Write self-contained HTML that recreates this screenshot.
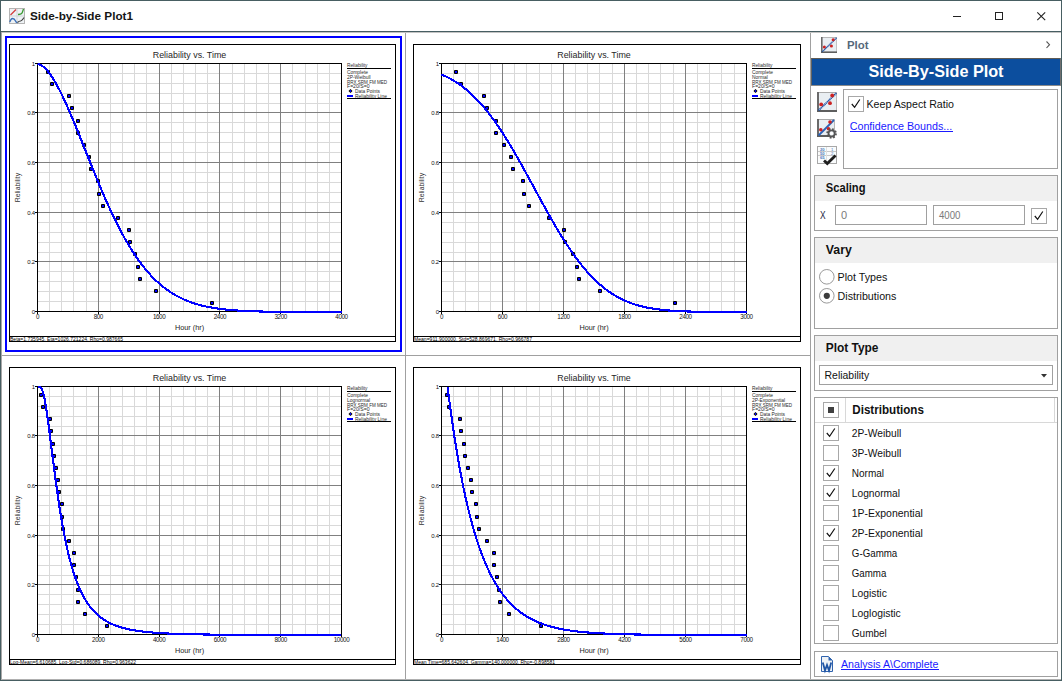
<!DOCTYPE html><html><head><meta charset="utf-8"><style>html,body{margin:0;padding:0;width:1062px;height:681px;overflow:hidden;background:#fff}svg{display:block}</style></head><body><svg width="1062" height="681" viewBox="0 0 1062 681" font-family='"Liberation Sans", sans-serif'>
<rect x="0" y="0" width="1062" height="681" fill="#fff"/>
<rect x="9" y="44" width="387" height="298" fill="#fff"/>
<rect x="9" y="44" width="387" height="1" fill="#000"/>
<rect x="9" y="341" width="387" height="1" fill="#000"/>
<rect x="9" y="44" width="1" height="298" fill="#000"/>
<rect x="395" y="44" width="1" height="298" fill="#000"/>
<rect x="9" y="336" width="387" height="1" fill="#000"/>
<rect x="49" y="64" width="1" height="247" fill="#d9d9d9"/>
<rect x="38" y="73" width="303" height="1" fill="#d9d9d9"/>
<rect x="61" y="64" width="1" height="247" fill="#d9d9d9"/>
<rect x="38" y="83" width="303" height="1" fill="#d9d9d9"/>
<rect x="73" y="64" width="1" height="247" fill="#d9d9d9"/>
<rect x="38" y="93" width="303" height="1" fill="#d9d9d9"/>
<rect x="86" y="64" width="1" height="247" fill="#d9d9d9"/>
<rect x="38" y="103" width="303" height="1" fill="#d9d9d9"/>
<rect x="110" y="64" width="1" height="247" fill="#d9d9d9"/>
<rect x="38" y="122" width="303" height="1" fill="#d9d9d9"/>
<rect x="122" y="64" width="1" height="247" fill="#d9d9d9"/>
<rect x="38" y="132" width="303" height="1" fill="#d9d9d9"/>
<rect x="134" y="64" width="1" height="247" fill="#d9d9d9"/>
<rect x="38" y="142" width="303" height="1" fill="#d9d9d9"/>
<rect x="146" y="64" width="1" height="247" fill="#d9d9d9"/>
<rect x="38" y="152" width="303" height="1" fill="#d9d9d9"/>
<rect x="171" y="64" width="1" height="247" fill="#d9d9d9"/>
<rect x="38" y="172" width="303" height="1" fill="#d9d9d9"/>
<rect x="183" y="64" width="1" height="247" fill="#d9d9d9"/>
<rect x="38" y="182" width="303" height="1" fill="#d9d9d9"/>
<rect x="195" y="64" width="1" height="247" fill="#d9d9d9"/>
<rect x="38" y="192" width="303" height="1" fill="#d9d9d9"/>
<rect x="207" y="64" width="1" height="247" fill="#d9d9d9"/>
<rect x="38" y="202" width="303" height="1" fill="#d9d9d9"/>
<rect x="232" y="64" width="1" height="247" fill="#d9d9d9"/>
<rect x="38" y="222" width="303" height="1" fill="#d9d9d9"/>
<rect x="244" y="64" width="1" height="247" fill="#d9d9d9"/>
<rect x="38" y="232" width="303" height="1" fill="#d9d9d9"/>
<rect x="256" y="64" width="1" height="247" fill="#d9d9d9"/>
<rect x="38" y="242" width="303" height="1" fill="#d9d9d9"/>
<rect x="268" y="64" width="1" height="247" fill="#d9d9d9"/>
<rect x="38" y="252" width="303" height="1" fill="#d9d9d9"/>
<rect x="292" y="64" width="1" height="247" fill="#d9d9d9"/>
<rect x="38" y="271" width="303" height="1" fill="#d9d9d9"/>
<rect x="305" y="64" width="1" height="247" fill="#d9d9d9"/>
<rect x="38" y="281" width="303" height="1" fill="#d9d9d9"/>
<rect x="317" y="64" width="1" height="247" fill="#d9d9d9"/>
<rect x="38" y="291" width="303" height="1" fill="#d9d9d9"/>
<rect x="329" y="64" width="1" height="247" fill="#d9d9d9"/>
<rect x="38" y="301" width="303" height="1" fill="#d9d9d9"/>
<rect x="98" y="64" width="1" height="247" fill="#808080"/>
<rect x="38" y="112" width="303" height="1" fill="#808080"/>
<rect x="159" y="64" width="1" height="247" fill="#808080"/>
<rect x="38" y="162" width="303" height="1" fill="#808080"/>
<rect x="219" y="64" width="1" height="247" fill="#808080"/>
<rect x="38" y="212" width="303" height="1" fill="#808080"/>
<rect x="280" y="64" width="1" height="247" fill="#808080"/>
<rect x="38" y="261" width="303" height="1" fill="#808080"/>
<rect x="37" y="63" width="305" height="1" fill="#000"/>
<rect x="37" y="311" width="305" height="1" fill="#000"/>
<rect x="37" y="63" width="1" height="249" fill="#000"/>
<rect x="341" y="63" width="1" height="249" fill="#000"/>
<rect x="35" y="63" width="2" height="1" fill="#000"/>
<rect x="37" y="312" width="1" height="2" fill="#000"/>
<rect x="35" y="112" width="2" height="1" fill="#000"/>
<rect x="98" y="312" width="1" height="2" fill="#000"/>
<rect x="35" y="162" width="2" height="1" fill="#000"/>
<rect x="159" y="312" width="1" height="2" fill="#000"/>
<rect x="35" y="212" width="2" height="1" fill="#000"/>
<rect x="219" y="312" width="1" height="2" fill="#000"/>
<rect x="35" y="261" width="2" height="1" fill="#000"/>
<rect x="280" y="312" width="1" height="2" fill="#000"/>
<rect x="35" y="311" width="2" height="1" fill="#000"/>
<rect x="341" y="312" width="1" height="2" fill="#000"/>
<text x="34.8" y="66.3" font-size="6" fill="#111" font-weight="normal" text-anchor="end" style="letter-spacing:-0.3px">1</text>
<text x="34.8" y="115.3" font-size="6" fill="#111" font-weight="normal" text-anchor="end" style="letter-spacing:-0.3px">0.8</text>
<text x="34.8" y="165.3" font-size="6" fill="#111" font-weight="normal" text-anchor="end" style="letter-spacing:-0.3px">0.6</text>
<text x="34.8" y="215.3" font-size="6" fill="#111" font-weight="normal" text-anchor="end" style="letter-spacing:-0.3px">0.4</text>
<text x="34.8" y="264.3" font-size="6" fill="#111" font-weight="normal" text-anchor="end" style="letter-spacing:-0.3px">0.2</text>
<text x="34.8" y="314.3" font-size="6" fill="#111" font-weight="normal" text-anchor="end" style="letter-spacing:-0.3px">0</text>
<text x="37.5" y="319" font-size="6.3" fill="#111" font-weight="normal" text-anchor="middle" style="letter-spacing:-0.4px">0</text>
<text x="98.3" y="319" font-size="6.3" fill="#111" font-weight="normal" text-anchor="middle" style="letter-spacing:-0.4px">800</text>
<text x="159.1" y="319" font-size="6.3" fill="#111" font-weight="normal" text-anchor="middle" style="letter-spacing:-0.4px">1600</text>
<text x="219.9" y="319" font-size="6.3" fill="#111" font-weight="normal" text-anchor="middle" style="letter-spacing:-0.4px">2400</text>
<text x="280.7" y="319" font-size="6.3" fill="#111" font-weight="normal" text-anchor="middle" style="letter-spacing:-0.4px">3200</text>
<text x="341.5" y="319" font-size="6.3" fill="#111" font-weight="normal" text-anchor="middle" style="letter-spacing:-0.4px">4000</text>
<text x="189.5" y="58" font-size="9" fill="#262626" font-weight="normal" text-anchor="middle" textLength="73.5" lengthAdjust="spacingAndGlyphs" >Reliability vs. Time</text>
<text x="189.5" y="329.8" font-size="7.3" fill="#222" font-weight="normal" text-anchor="middle" >Hour (hr)</text>
<text transform="translate(19.8,187.5) rotate(-90)" font-size="6.4" fill="#333" text-anchor="middle" textLength="29.4" lengthAdjust="spacingAndGlyphs">Reliability</text>
<rect x="46" y="70" width="4" height="4" rx="0.9" fill="#000"/>
<rect x="47" y="71" width="2" height="2" fill="#0000ff"/>
<rect x="50" y="82" width="4" height="4" rx="0.9" fill="#000"/>
<rect x="51" y="83" width="2" height="2" fill="#0000ff"/>
<rect x="67" y="94" width="4" height="4" rx="0.9" fill="#000"/>
<rect x="68" y="95" width="2" height="2" fill="#0000ff"/>
<rect x="70" y="106" width="4" height="4" rx="0.9" fill="#000"/>
<rect x="71" y="107" width="2" height="2" fill="#0000ff"/>
<rect x="76" y="119" width="4" height="4" rx="0.9" fill="#000"/>
<rect x="77" y="120" width="2" height="2" fill="#0000ff"/>
<rect x="76" y="131" width="4" height="4" rx="0.9" fill="#000"/>
<rect x="77" y="132" width="2" height="2" fill="#0000ff"/>
<rect x="82" y="143" width="4" height="4" rx="0.9" fill="#000"/>
<rect x="83" y="144" width="2" height="2" fill="#0000ff"/>
<rect x="87" y="155" width="4" height="4" rx="0.9" fill="#000"/>
<rect x="88" y="156" width="2" height="2" fill="#0000ff"/>
<rect x="89" y="167" width="4" height="4" rx="0.9" fill="#000"/>
<rect x="90" y="168" width="2" height="2" fill="#0000ff"/>
<rect x="96" y="179" width="4" height="4" rx="0.9" fill="#000"/>
<rect x="97" y="180" width="2" height="2" fill="#0000ff"/>
<rect x="97" y="192" width="4" height="4" rx="0.9" fill="#000"/>
<rect x="98" y="193" width="2" height="2" fill="#0000ff"/>
<rect x="101" y="204" width="4" height="4" rx="0.9" fill="#000"/>
<rect x="102" y="205" width="2" height="2" fill="#0000ff"/>
<rect x="116" y="216" width="4" height="4" rx="0.9" fill="#000"/>
<rect x="117" y="217" width="2" height="2" fill="#0000ff"/>
<rect x="127" y="228" width="4" height="4" rx="0.9" fill="#000"/>
<rect x="128" y="229" width="2" height="2" fill="#0000ff"/>
<rect x="128" y="240" width="4" height="4" rx="0.9" fill="#000"/>
<rect x="129" y="241" width="2" height="2" fill="#0000ff"/>
<rect x="133" y="252" width="4" height="4" rx="0.9" fill="#000"/>
<rect x="134" y="253" width="2" height="2" fill="#0000ff"/>
<rect x="136" y="265" width="4" height="4" rx="0.9" fill="#000"/>
<rect x="137" y="266" width="2" height="2" fill="#0000ff"/>
<rect x="138" y="277" width="4" height="4" rx="0.9" fill="#000"/>
<rect x="139" y="278" width="2" height="2" fill="#0000ff"/>
<rect x="154" y="289" width="4" height="4" rx="0.9" fill="#000"/>
<rect x="155" y="290" width="2" height="2" fill="#0000ff"/>
<rect x="210" y="301" width="4" height="4" rx="0.9" fill="#000"/>
<rect x="211" y="302" width="2" height="2" fill="#0000ff"/>
<clipPath id="c0"><rect x="37" y="62" width="305" height="251"/></clipPath>
<polyline clip-path="url(#c0)" points="37.50,64.00 38.26,64.08 39.02,64.27 39.78,64.54 40.54,64.89 41.30,65.30 42.06,65.79 42.82,66.33 43.58,66.94 44.34,67.60 45.10,68.31 45.86,69.08 46.62,69.90 47.38,70.77 48.14,71.68 48.90,72.64 49.66,73.65 50.42,74.69 51.18,75.78 51.94,76.91 52.70,78.08 53.46,79.28 54.22,80.53 54.98,81.80 55.74,83.11 56.50,84.46 57.26,85.83 58.02,87.24 58.78,88.68 59.54,90.14 60.30,91.64 61.06,93.16 61.82,94.70 62.58,96.27 63.34,97.87 64.10,99.48 64.86,101.12 65.62,102.78 66.38,104.46 67.14,106.16 67.90,107.87 68.66,109.60 69.42,111.35 70.18,113.12 70.94,114.90 71.70,116.69 72.46,118.50 73.22,120.31 73.98,122.14 74.74,123.98 75.50,125.83 76.26,127.69 77.02,129.56 77.78,131.43 78.54,133.31 79.30,135.19 80.06,137.09 80.82,138.98 81.58,140.88 82.34,142.78 83.10,144.69 83.86,146.59 84.62,148.50 85.38,150.41 86.14,152.31 86.90,154.22 87.66,156.12 88.42,158.03 89.18,159.93 89.94,161.82 90.70,163.72 91.46,165.61 92.22,167.49 92.98,169.37 93.74,171.24 94.50,173.11 95.26,174.97 96.02,176.82 96.78,178.67 97.54,180.51 98.30,182.33 99.06,184.15 99.82,185.96 100.58,187.77 101.34,189.56 102.10,191.34 102.86,193.11 103.62,194.87 104.38,196.61 105.14,198.35 105.90,200.07 106.66,201.78 107.42,203.48 108.18,205.17 108.94,206.84 109.70,208.50 110.46,210.15 111.22,211.78 111.98,213.40 112.74,215.00 113.50,216.59 114.26,218.17 115.02,219.73 115.78,221.27 116.54,222.80 117.30,224.32 118.06,225.82 118.82,227.30 119.58,228.77 120.34,230.22 121.10,231.66 121.86,233.08 122.62,234.48 123.38,235.87 124.14,237.25 124.90,238.60 125.66,239.94 126.42,241.27 127.18,242.58 127.94,243.87 128.70,245.15 129.46,246.41 130.22,247.65 130.98,248.88 131.74,250.09 132.50,251.28 133.26,252.46 134.02,253.62 134.78,254.77 135.54,255.90 136.30,257.01 137.06,258.11 137.82,259.19 138.58,260.26 139.34,261.31 140.10,262.34 140.86,263.36 141.62,264.37 142.38,265.36 143.14,266.33 143.90,267.29 144.66,268.23 145.42,269.15 146.18,270.07 146.94,270.96 147.70,271.85 148.46,272.71 149.22,273.57 149.98,274.41 150.74,275.23 151.50,276.04 152.26,276.84 153.02,277.62 153.78,278.39 154.54,279.15 155.30,279.89 156.06,280.62 156.82,281.33 157.58,282.03 158.34,282.72 159.10,283.40 159.86,284.06 160.62,284.72 161.38,285.35 162.14,285.98 162.90,286.60 163.66,287.20 164.42,287.79 165.18,288.37 165.94,288.94 166.70,289.50 167.46,290.04 168.22,290.58 168.98,291.10 169.74,291.61 170.50,292.12 171.26,292.61 172.02,293.09 172.78,293.56 173.54,294.03 174.30,294.48 175.06,294.92 175.82,295.36 176.58,295.78 177.34,296.20 178.10,296.60 178.86,297.00 179.62,297.39 180.38,297.77 181.14,298.14 181.90,298.50 182.66,298.86 183.42,299.20 184.18,299.54 184.94,299.87 185.70,300.20 186.46,300.51 187.22,300.82 187.98,301.12 188.74,301.42 189.50,301.71 190.26,301.99 191.02,302.26 191.78,302.53 192.54,302.79 193.30,303.05 194.06,303.29 194.82,303.54 195.58,303.77 196.34,304.00 197.10,304.23 197.86,304.45 198.62,304.66 199.38,304.87 200.14,305.08 200.90,305.27 201.66,305.47 202.42,305.66 203.18,305.84 203.94,306.02 204.70,306.19 205.46,306.36 206.22,306.53 206.98,306.69 207.74,306.85 208.50,307.00 209.26,307.15 210.02,307.29 210.78,307.43 211.54,307.57 212.30,307.70 213.06,307.83 213.82,307.96 214.58,308.08 215.34,308.20 216.10,308.32 216.86,308.43 217.62,308.54 218.38,308.65 219.14,308.75 219.90,308.85 220.66,308.95 221.42,309.05 222.18,309.14 222.94,309.23 223.70,309.31 224.46,309.40 225.22,309.48 225.98,309.56 226.74,309.64 227.50,309.72 228.26,309.79 229.02,309.86 229.78,309.93 230.54,310.00 231.30,310.06 232.06,310.12 232.82,310.19 233.58,310.24 234.34,310.30 235.10,310.36 235.86,310.41 236.62,310.46 237.38,310.52 238.14,310.57 238.90,310.61 239.66,310.66 240.42,310.70 241.18,310.75 241.94,310.79 242.70,310.83 243.46,310.87 244.22,310.91 244.98,310.95 245.74,310.98 246.50,311.02 247.26,311.05 248.02,311.08 248.78,311.12 249.54,311.15 250.30,311.18 251.06,311.20 251.82,311.23 252.58,311.26 253.34,311.28 254.10,311.31 254.86,311.33 255.62,311.36 256.38,311.38 257.14,311.40 257.90,311.42 258.66,311.44 259.42,311.46 260.18,311.48 260.94,311.50 261.70,311.52 262.46,311.54 263.22,311.55 263.98,311.57 264.74,311.59 265.50,311.60 266.26,311.62 267.02,311.63 267.78,311.64 268.54,311.66 269.30,311.67 270.06,311.68 270.82,311.69 271.58,311.70 272.34,311.72 273.10,311.73 273.86,311.74 274.62,311.75 275.38,311.76 276.14,311.77 276.90,311.77 277.66,311.78 278.42,311.79 279.18,311.80 279.94,311.81 280.70,311.81 281.46,311.82 282.22,311.83 282.98,311.83 283.74,311.84 284.50,311.85 285.26,311.85 286.02,311.86 286.78,311.86 287.54,311.87 288.30,311.87 289.06,311.88 289.82,311.88 290.58,311.89 291.34,311.89 292.10,311.90 292.86,311.90 293.62,311.91 294.38,311.91 295.14,311.91 295.90,311.92 296.66,311.92 297.42,311.92 298.18,311.93 298.94,311.93 299.70,311.93 300.46,311.93 301.22,311.94 301.98,311.94 302.74,311.94 303.50,311.94 304.26,311.95 305.02,311.95 305.78,311.95 306.54,311.95 307.30,311.96 308.06,311.96 308.82,311.96 309.58,311.96 310.34,311.96 311.10,311.96 311.86,311.97 312.62,311.97 313.38,311.97 314.14,311.97 314.90,311.97 315.66,311.97 316.42,311.97 317.18,311.97 317.94,311.98 318.70,311.98 319.46,311.98 320.22,311.98 320.98,311.98 321.74,311.98 322.50,311.98 323.26,311.98 324.02,311.98 324.78,311.98 325.54,311.98 326.30,311.98 327.06,311.99 327.82,311.99 328.58,311.99 329.34,311.99 330.10,311.99 330.86,311.99 331.62,311.99 332.38,311.99 333.14,311.99 333.90,311.99 334.66,311.99 335.42,311.99 336.18,311.99 336.94,311.99 337.70,311.99 338.46,311.99 339.22,311.99 339.98,311.99 340.74,311.99 341.50,311.99" fill="none" stroke="#0000ff" stroke-width="2.1" stroke-linejoin="round" shape-rendering="crispEdges"/>
<text x="347" y="67.2" font-size="4.9" fill="#2a2a2a" font-weight="normal" text-anchor="start" textLength="20.5" lengthAdjust="spacingAndGlyphs" >Reliability</text>
<rect x="347" y="68" width="44" height="1" fill="#000"/>
<text x="347" y="73.9" font-size="4.9" fill="#2a2a2a" font-weight="normal" text-anchor="start" textLength="21" lengthAdjust="spacingAndGlyphs" >Complete</text>
<text x="347" y="79.0" font-size="4.9" fill="#2a2a2a" font-weight="normal" text-anchor="start" >2P-Weibull</text>
<text x="347" y="84.2" font-size="4.9" fill="#2a2a2a" font-weight="normal" text-anchor="start" textLength="40" lengthAdjust="spacingAndGlyphs" >RRX SRM FM MED</text>
<text x="347" y="88.2" font-size="4.9" fill="#2a2a2a" font-weight="normal" text-anchor="start" textLength="22.5" lengthAdjust="spacingAndGlyphs" >F=20/S=0</text>
<path d="M350.5 89 L352.5 91 L350.5 93 L348.5 91 Z" fill="#000"/>
<rect x="350" y="90" width="1" height="2" fill="#0000ff"/>
<text x="355" y="92.8" font-size="4.9" fill="#2a2a2a" font-weight="normal" text-anchor="start" textLength="25" lengthAdjust="spacingAndGlyphs" >Data Points</text>
<rect x="347" y="95" width="6" height="2" fill="#0000ff"/>
<text x="355" y="97.8" font-size="4.9" fill="#2a2a2a" font-weight="normal" text-anchor="start" textLength="32" lengthAdjust="spacingAndGlyphs" >Reliability Line</text>
<rect x="347" y="98" width="44" height="1" fill="#000"/>
<text x="10" y="340.9" font-size="5.6" fill="#000" font-weight="normal" text-anchor="start" textLength="113" lengthAdjust="spacingAndGlyphs" >Beta=1.735945, Eta=1026.721224, Rho=0.987665</text>
<rect x="413" y="44" width="388" height="298" fill="#fff"/>
<rect x="413" y="44" width="388" height="1" fill="#000"/>
<rect x="413" y="341" width="388" height="1" fill="#000"/>
<rect x="413" y="44" width="1" height="298" fill="#000"/>
<rect x="800" y="44" width="1" height="298" fill="#000"/>
<rect x="413" y="336" width="388" height="1" fill="#000"/>
<rect x="453" y="64" width="1" height="247" fill="#d9d9d9"/>
<rect x="442" y="73" width="304" height="1" fill="#d9d9d9"/>
<rect x="465" y="64" width="1" height="247" fill="#d9d9d9"/>
<rect x="442" y="83" width="304" height="1" fill="#d9d9d9"/>
<rect x="478" y="64" width="1" height="247" fill="#d9d9d9"/>
<rect x="442" y="93" width="304" height="1" fill="#d9d9d9"/>
<rect x="490" y="64" width="1" height="247" fill="#d9d9d9"/>
<rect x="442" y="103" width="304" height="1" fill="#d9d9d9"/>
<rect x="514" y="64" width="1" height="247" fill="#d9d9d9"/>
<rect x="442" y="122" width="304" height="1" fill="#d9d9d9"/>
<rect x="526" y="64" width="1" height="247" fill="#d9d9d9"/>
<rect x="442" y="132" width="304" height="1" fill="#d9d9d9"/>
<rect x="539" y="64" width="1" height="247" fill="#d9d9d9"/>
<rect x="442" y="142" width="304" height="1" fill="#d9d9d9"/>
<rect x="551" y="64" width="1" height="247" fill="#d9d9d9"/>
<rect x="442" y="152" width="304" height="1" fill="#d9d9d9"/>
<rect x="575" y="64" width="1" height="247" fill="#d9d9d9"/>
<rect x="442" y="172" width="304" height="1" fill="#d9d9d9"/>
<rect x="587" y="64" width="1" height="247" fill="#d9d9d9"/>
<rect x="442" y="182" width="304" height="1" fill="#d9d9d9"/>
<rect x="599" y="64" width="1" height="247" fill="#d9d9d9"/>
<rect x="442" y="192" width="304" height="1" fill="#d9d9d9"/>
<rect x="612" y="64" width="1" height="247" fill="#d9d9d9"/>
<rect x="442" y="202" width="304" height="1" fill="#d9d9d9"/>
<rect x="636" y="64" width="1" height="247" fill="#d9d9d9"/>
<rect x="442" y="222" width="304" height="1" fill="#d9d9d9"/>
<rect x="648" y="64" width="1" height="247" fill="#d9d9d9"/>
<rect x="442" y="232" width="304" height="1" fill="#d9d9d9"/>
<rect x="660" y="64" width="1" height="247" fill="#d9d9d9"/>
<rect x="442" y="242" width="304" height="1" fill="#d9d9d9"/>
<rect x="673" y="64" width="1" height="247" fill="#d9d9d9"/>
<rect x="442" y="252" width="304" height="1" fill="#d9d9d9"/>
<rect x="697" y="64" width="1" height="247" fill="#d9d9d9"/>
<rect x="442" y="271" width="304" height="1" fill="#d9d9d9"/>
<rect x="709" y="64" width="1" height="247" fill="#d9d9d9"/>
<rect x="442" y="281" width="304" height="1" fill="#d9d9d9"/>
<rect x="721" y="64" width="1" height="247" fill="#d9d9d9"/>
<rect x="442" y="291" width="304" height="1" fill="#d9d9d9"/>
<rect x="734" y="64" width="1" height="247" fill="#d9d9d9"/>
<rect x="442" y="301" width="304" height="1" fill="#d9d9d9"/>
<rect x="502" y="64" width="1" height="247" fill="#808080"/>
<rect x="442" y="112" width="304" height="1" fill="#808080"/>
<rect x="563" y="64" width="1" height="247" fill="#808080"/>
<rect x="442" y="162" width="304" height="1" fill="#808080"/>
<rect x="624" y="64" width="1" height="247" fill="#808080"/>
<rect x="442" y="212" width="304" height="1" fill="#808080"/>
<rect x="685" y="64" width="1" height="247" fill="#808080"/>
<rect x="442" y="261" width="304" height="1" fill="#808080"/>
<rect x="441" y="63" width="306" height="1" fill="#000"/>
<rect x="441" y="311" width="306" height="1" fill="#000"/>
<rect x="441" y="63" width="1" height="249" fill="#000"/>
<rect x="746" y="63" width="1" height="249" fill="#000"/>
<rect x="439" y="63" width="2" height="1" fill="#000"/>
<rect x="441" y="312" width="1" height="2" fill="#000"/>
<rect x="439" y="112" width="2" height="1" fill="#000"/>
<rect x="502" y="312" width="1" height="2" fill="#000"/>
<rect x="439" y="162" width="2" height="1" fill="#000"/>
<rect x="563" y="312" width="1" height="2" fill="#000"/>
<rect x="439" y="212" width="2" height="1" fill="#000"/>
<rect x="624" y="312" width="1" height="2" fill="#000"/>
<rect x="439" y="261" width="2" height="1" fill="#000"/>
<rect x="685" y="312" width="1" height="2" fill="#000"/>
<rect x="439" y="311" width="2" height="1" fill="#000"/>
<rect x="746" y="312" width="1" height="2" fill="#000"/>
<text x="438.8" y="66.3" font-size="6" fill="#111" font-weight="normal" text-anchor="end" style="letter-spacing:-0.3px">1</text>
<text x="438.8" y="115.3" font-size="6" fill="#111" font-weight="normal" text-anchor="end" style="letter-spacing:-0.3px">0.8</text>
<text x="438.8" y="165.3" font-size="6" fill="#111" font-weight="normal" text-anchor="end" style="letter-spacing:-0.3px">0.6</text>
<text x="438.8" y="215.3" font-size="6" fill="#111" font-weight="normal" text-anchor="end" style="letter-spacing:-0.3px">0.4</text>
<text x="438.8" y="264.3" font-size="6" fill="#111" font-weight="normal" text-anchor="end" style="letter-spacing:-0.3px">0.2</text>
<text x="438.8" y="314.3" font-size="6" fill="#111" font-weight="normal" text-anchor="end" style="letter-spacing:-0.3px">0</text>
<text x="441.5" y="319" font-size="6.3" fill="#111" font-weight="normal" text-anchor="middle" style="letter-spacing:-0.4px">0</text>
<text x="502.5" y="319" font-size="6.3" fill="#111" font-weight="normal" text-anchor="middle" style="letter-spacing:-0.4px">600</text>
<text x="563.5" y="319" font-size="6.3" fill="#111" font-weight="normal" text-anchor="middle" style="letter-spacing:-0.4px">1200</text>
<text x="624.5" y="319" font-size="6.3" fill="#111" font-weight="normal" text-anchor="middle" style="letter-spacing:-0.4px">1800</text>
<text x="685.5" y="319" font-size="6.3" fill="#111" font-weight="normal" text-anchor="middle" style="letter-spacing:-0.4px">2400</text>
<text x="746.5" y="319" font-size="6.3" fill="#111" font-weight="normal" text-anchor="middle" style="letter-spacing:-0.4px">3000</text>
<text x="594.0" y="58" font-size="9" fill="#262626" font-weight="normal" text-anchor="middle" textLength="73.5" lengthAdjust="spacingAndGlyphs" >Reliability vs. Time</text>
<text x="594.0" y="329.8" font-size="7.3" fill="#222" font-weight="normal" text-anchor="middle" >Hour (hr)</text>
<text transform="translate(423.8,187.5) rotate(-90)" font-size="6.4" fill="#333" text-anchor="middle" textLength="29.4" lengthAdjust="spacingAndGlyphs">Reliability</text>
<rect x="454" y="70" width="4" height="4" rx="0.9" fill="#000"/>
<rect x="455" y="71" width="2" height="2" fill="#0000ff"/>
<rect x="459" y="82" width="4" height="4" rx="0.9" fill="#000"/>
<rect x="460" y="83" width="2" height="2" fill="#0000ff"/>
<rect x="482" y="94" width="4" height="4" rx="0.9" fill="#000"/>
<rect x="483" y="95" width="2" height="2" fill="#0000ff"/>
<rect x="485" y="106" width="4" height="4" rx="0.9" fill="#000"/>
<rect x="486" y="107" width="2" height="2" fill="#0000ff"/>
<rect x="494" y="119" width="4" height="4" rx="0.9" fill="#000"/>
<rect x="495" y="120" width="2" height="2" fill="#0000ff"/>
<rect x="494" y="131" width="4" height="4" rx="0.9" fill="#000"/>
<rect x="495" y="132" width="2" height="2" fill="#0000ff"/>
<rect x="502" y="143" width="4" height="4" rx="0.9" fill="#000"/>
<rect x="503" y="144" width="2" height="2" fill="#0000ff"/>
<rect x="509" y="155" width="4" height="4" rx="0.9" fill="#000"/>
<rect x="510" y="156" width="2" height="2" fill="#0000ff"/>
<rect x="511" y="167" width="4" height="4" rx="0.9" fill="#000"/>
<rect x="512" y="168" width="2" height="2" fill="#0000ff"/>
<rect x="521" y="179" width="4" height="4" rx="0.9" fill="#000"/>
<rect x="522" y="180" width="2" height="2" fill="#0000ff"/>
<rect x="522" y="192" width="4" height="4" rx="0.9" fill="#000"/>
<rect x="523" y="193" width="2" height="2" fill="#0000ff"/>
<rect x="527" y="204" width="4" height="4" rx="0.9" fill="#000"/>
<rect x="528" y="205" width="2" height="2" fill="#0000ff"/>
<rect x="547" y="216" width="4" height="4" rx="0.9" fill="#000"/>
<rect x="548" y="217" width="2" height="2" fill="#0000ff"/>
<rect x="562" y="228" width="4" height="4" rx="0.9" fill="#000"/>
<rect x="563" y="229" width="2" height="2" fill="#0000ff"/>
<rect x="563" y="240" width="4" height="4" rx="0.9" fill="#000"/>
<rect x="564" y="241" width="2" height="2" fill="#0000ff"/>
<rect x="571" y="252" width="4" height="4" rx="0.9" fill="#000"/>
<rect x="572" y="253" width="2" height="2" fill="#0000ff"/>
<rect x="575" y="265" width="4" height="4" rx="0.9" fill="#000"/>
<rect x="576" y="266" width="2" height="2" fill="#0000ff"/>
<rect x="577" y="277" width="4" height="4" rx="0.9" fill="#000"/>
<rect x="578" y="278" width="2" height="2" fill="#0000ff"/>
<rect x="598" y="289" width="4" height="4" rx="0.9" fill="#000"/>
<rect x="599" y="290" width="2" height="2" fill="#0000ff"/>
<rect x="673" y="301" width="4" height="4" rx="0.9" fill="#000"/>
<rect x="674" y="302" width="2" height="2" fill="#0000ff"/>
<clipPath id="c1"><rect x="441" y="62" width="306" height="251"/></clipPath>
<polyline clip-path="url(#c1)" points="441.50,74.50 442.26,74.82 443.02,75.15 443.79,75.49 444.55,75.83 445.31,76.18 446.07,76.55 446.84,76.92 447.60,77.30 448.36,77.68 449.12,78.08 449.89,78.49 450.65,78.90 451.41,79.32 452.18,79.76 452.94,80.20 453.70,80.65 454.46,81.12 455.23,81.59 455.99,82.07 456.75,82.56 457.51,83.06 458.27,83.58 459.04,84.10 459.80,84.63 460.56,85.18 461.32,85.73 462.09,86.30 462.85,86.87 463.61,87.46 464.38,88.06 465.14,88.67 465.90,89.29 466.66,89.92 467.43,90.56 468.19,91.22 468.95,91.88 469.71,92.56 470.48,93.25 471.24,93.95 472.00,94.66 472.76,95.39 473.52,96.12 474.29,96.87 475.05,97.63 475.81,98.40 476.57,99.19 477.34,99.98 478.10,100.79 478.86,101.61 479.62,102.44 480.39,103.29 481.15,104.14 481.91,105.01 482.68,105.89 483.44,106.78 484.20,107.69 484.96,108.60 485.73,109.53 486.49,110.47 487.25,111.43 488.01,112.39 488.77,113.37 489.54,114.35 490.30,115.35 491.06,116.36 491.82,117.39 492.59,118.42 493.35,119.47 494.11,120.52 494.88,121.59 495.64,122.67 496.40,123.76 497.16,124.86 497.93,125.97 498.69,127.10 499.45,128.23 500.21,129.37 500.98,130.53 501.74,131.69 502.50,132.86 503.26,134.05 504.02,135.24 504.79,136.45 505.55,137.66 506.31,138.88 507.07,140.11 507.84,141.35 508.60,142.60 509.36,143.86 510.12,145.12 510.89,146.39 511.65,147.67 512.41,148.96 513.17,150.26 513.94,151.56 514.70,152.87 515.46,154.19 516.23,155.51 516.99,156.84 517.75,158.18 518.51,159.52 519.27,160.87 520.04,162.22 520.80,163.58 521.56,164.94 522.33,166.31 523.09,167.68 523.85,169.05 524.61,170.43 525.38,171.82 526.14,173.20 526.90,174.59 527.66,175.98 528.42,177.38 529.19,178.77 529.95,180.17 530.71,181.57 531.48,182.97 532.24,184.37 533.00,185.77 533.76,187.18 534.52,188.58 535.29,189.98 536.05,191.39 536.81,192.79 537.58,194.19 538.34,195.59 539.10,196.99 539.86,198.38 540.62,199.78 541.39,201.17 542.15,202.56 542.91,203.94 543.67,205.33 544.44,206.71 545.20,208.08 545.96,209.45 546.73,210.82 547.49,212.19 548.25,213.54 549.01,214.90 549.77,216.25 550.54,217.59 551.30,218.93 552.06,220.26 552.83,221.58 553.59,222.90 554.35,224.21 555.11,225.52 555.88,226.81 556.64,228.10 557.40,229.38 558.16,230.66 558.92,231.93 559.69,233.18 560.45,234.43 561.21,235.67 561.98,236.91 562.74,238.13 563.50,239.34 564.26,240.55 565.02,241.75 565.79,242.93 566.55,244.11 567.31,245.27 568.08,246.43 568.84,247.57 569.60,248.71 570.36,249.83 571.12,250.95 571.89,252.05 572.65,253.14 573.41,254.22 574.17,255.29 574.94,256.35 575.70,257.40 576.46,258.44 577.23,259.46 577.99,260.47 578.75,261.47 579.51,262.46 580.27,263.44 581.04,264.41 581.80,265.36 582.56,266.31 583.33,267.24 584.09,268.15 584.85,269.06 585.61,269.96 586.38,270.84 587.14,271.71 587.90,272.57 588.66,273.41 589.42,274.25 590.19,275.07 590.95,275.88 591.71,276.68 592.48,277.46 593.24,278.24 594.00,279.00 594.76,279.75 595.52,280.49 596.29,281.21 597.05,281.93 597.81,282.63 598.58,283.32 599.34,284.00 600.10,284.67 600.86,285.33 601.62,285.97 602.39,286.60 603.15,287.23 603.91,287.84 604.67,288.44 605.44,289.03 606.20,289.60 606.96,290.17 607.73,290.73 608.49,291.27 609.25,291.81 610.01,292.33 610.77,292.85 611.54,293.35 612.30,293.85 613.06,294.33 613.83,294.80 614.59,295.27 615.35,295.72 616.11,296.17 616.88,296.60 617.64,297.03 618.40,297.44 619.16,297.85 619.92,298.25 620.69,298.64 621.45,299.02 622.21,299.39 622.98,299.75 623.74,300.11 624.50,300.45 625.26,300.79 626.02,301.12 626.79,301.45 627.55,301.76 628.31,302.07 629.08,302.37 629.84,302.66 630.60,302.95 631.36,303.22 632.12,303.49 632.89,303.76 633.65,304.01 634.41,304.27 635.17,304.51 635.94,304.75 636.70,304.98 637.46,305.20 638.23,305.42 638.99,305.63 639.75,305.84 640.51,306.04 641.27,306.24 642.04,306.43 642.80,306.62 643.56,306.80 644.33,306.97 645.09,307.14 645.85,307.30 646.61,307.46 647.38,307.62 648.14,307.77 648.90,307.92 649.66,308.06 650.42,308.20 651.19,308.33 651.95,308.46 652.71,308.59 653.48,308.71 654.24,308.83 655.00,308.94 655.76,309.05 656.52,309.16 657.29,309.26 658.05,309.36 658.81,309.46 659.58,309.55 660.34,309.65 661.10,309.73 661.86,309.82 662.62,309.90 663.39,309.98 664.15,310.06 664.91,310.13 665.67,310.20 666.44,310.27 667.20,310.34 667.96,310.41 668.73,310.47 669.49,310.53 670.25,310.59 671.01,310.64 671.77,310.70 672.54,310.75 673.30,310.80 674.06,310.85 674.83,310.89 675.59,310.94 676.35,310.98 677.11,311.02 677.88,311.06 678.64,311.10 679.40,311.14 680.16,311.18 680.92,311.21 681.69,311.24 682.45,311.28 683.21,311.31 683.98,311.34 684.74,311.37 685.50,311.39 686.26,311.42 687.02,311.44 687.79,311.47 688.55,311.49 689.31,311.51 690.08,311.54 690.84,311.56 691.60,311.58 692.36,311.59 693.12,311.61 693.89,311.63 694.65,311.65 695.41,311.66 696.17,311.68 696.94,311.69 697.70,311.71 698.46,311.72 699.23,311.73 699.99,311.75 700.75,311.76 701.51,311.77 702.27,311.78 703.04,311.79 703.80,311.80 704.56,311.81 705.33,311.82 706.09,311.83 706.85,311.84 707.61,311.84 708.38,311.85 709.14,311.86 709.90,311.87 710.66,311.87 711.42,311.88 712.19,311.88 712.95,311.89 713.71,311.90 714.48,311.90 715.24,311.91 716.00,311.91 716.76,311.91 717.52,311.92 718.29,311.92 719.05,311.93 719.81,311.93 720.58,311.93 721.34,311.94 722.10,311.94 722.86,311.94 723.62,311.95 724.39,311.95 725.15,311.95 725.91,311.95 726.67,311.96 727.44,311.96 728.20,311.96 728.96,311.96 729.73,311.97 730.49,311.97 731.25,311.97 732.01,311.97 732.77,311.97 733.54,311.97 734.30,311.98 735.06,311.98 735.83,311.98 736.59,311.98 737.35,311.98 738.11,311.98 738.88,311.98 739.64,311.98 740.40,311.98 741.16,311.99 741.92,311.99 742.69,311.99 743.45,311.99 744.21,311.99 744.98,311.99 745.74,311.99 746.50,311.99" fill="none" stroke="#0000ff" stroke-width="2.1" stroke-linejoin="round" shape-rendering="crispEdges"/>
<text x="752" y="67.2" font-size="4.9" fill="#2a2a2a" font-weight="normal" text-anchor="start" textLength="20.5" lengthAdjust="spacingAndGlyphs" >Reliability</text>
<rect x="752" y="68" width="44" height="1" fill="#000"/>
<text x="752" y="73.9" font-size="4.9" fill="#2a2a2a" font-weight="normal" text-anchor="start" textLength="21" lengthAdjust="spacingAndGlyphs" >Complete</text>
<text x="752" y="79.0" font-size="4.9" fill="#2a2a2a" font-weight="normal" text-anchor="start" >Normal</text>
<text x="752" y="84.2" font-size="4.9" fill="#2a2a2a" font-weight="normal" text-anchor="start" textLength="40" lengthAdjust="spacingAndGlyphs" >RRX SRM FM MED</text>
<text x="752" y="88.2" font-size="4.9" fill="#2a2a2a" font-weight="normal" text-anchor="start" textLength="22.5" lengthAdjust="spacingAndGlyphs" >F=20/S=0</text>
<path d="M755.5 89 L757.5 91 L755.5 93 L753.5 91 Z" fill="#000"/>
<rect x="755" y="90" width="1" height="2" fill="#0000ff"/>
<text x="760" y="92.8" font-size="4.9" fill="#2a2a2a" font-weight="normal" text-anchor="start" textLength="25" lengthAdjust="spacingAndGlyphs" >Data Points</text>
<rect x="752" y="95" width="6" height="2" fill="#0000ff"/>
<text x="760" y="97.8" font-size="4.9" fill="#2a2a2a" font-weight="normal" text-anchor="start" textLength="32" lengthAdjust="spacingAndGlyphs" >Reliability Line</text>
<rect x="752" y="98" width="44" height="1" fill="#000"/>
<text x="414" y="340.9" font-size="5.6" fill="#000" font-weight="normal" text-anchor="start" textLength="118" lengthAdjust="spacingAndGlyphs" >Mean=911.900000, Std=528.869671, Rho=0.966787</text>
<rect x="9" y="367" width="387" height="298" fill="#fff"/>
<rect x="9" y="367" width="387" height="1" fill="#000"/>
<rect x="9" y="664" width="387" height="1" fill="#000"/>
<rect x="9" y="367" width="1" height="298" fill="#000"/>
<rect x="395" y="367" width="1" height="298" fill="#000"/>
<rect x="9" y="659" width="387" height="1" fill="#000"/>
<rect x="49" y="387" width="1" height="247" fill="#d9d9d9"/>
<rect x="38" y="396" width="303" height="1" fill="#d9d9d9"/>
<rect x="61" y="387" width="1" height="247" fill="#d9d9d9"/>
<rect x="38" y="406" width="303" height="1" fill="#d9d9d9"/>
<rect x="73" y="387" width="1" height="247" fill="#d9d9d9"/>
<rect x="38" y="416" width="303" height="1" fill="#d9d9d9"/>
<rect x="86" y="387" width="1" height="247" fill="#d9d9d9"/>
<rect x="38" y="426" width="303" height="1" fill="#d9d9d9"/>
<rect x="110" y="387" width="1" height="247" fill="#d9d9d9"/>
<rect x="38" y="445" width="303" height="1" fill="#d9d9d9"/>
<rect x="122" y="387" width="1" height="247" fill="#d9d9d9"/>
<rect x="38" y="455" width="303" height="1" fill="#d9d9d9"/>
<rect x="134" y="387" width="1" height="247" fill="#d9d9d9"/>
<rect x="38" y="465" width="303" height="1" fill="#d9d9d9"/>
<rect x="146" y="387" width="1" height="247" fill="#d9d9d9"/>
<rect x="38" y="475" width="303" height="1" fill="#d9d9d9"/>
<rect x="171" y="387" width="1" height="247" fill="#d9d9d9"/>
<rect x="38" y="495" width="303" height="1" fill="#d9d9d9"/>
<rect x="183" y="387" width="1" height="247" fill="#d9d9d9"/>
<rect x="38" y="505" width="303" height="1" fill="#d9d9d9"/>
<rect x="195" y="387" width="1" height="247" fill="#d9d9d9"/>
<rect x="38" y="515" width="303" height="1" fill="#d9d9d9"/>
<rect x="207" y="387" width="1" height="247" fill="#d9d9d9"/>
<rect x="38" y="525" width="303" height="1" fill="#d9d9d9"/>
<rect x="232" y="387" width="1" height="247" fill="#d9d9d9"/>
<rect x="38" y="545" width="303" height="1" fill="#d9d9d9"/>
<rect x="244" y="387" width="1" height="247" fill="#d9d9d9"/>
<rect x="38" y="555" width="303" height="1" fill="#d9d9d9"/>
<rect x="256" y="387" width="1" height="247" fill="#d9d9d9"/>
<rect x="38" y="565" width="303" height="1" fill="#d9d9d9"/>
<rect x="268" y="387" width="1" height="247" fill="#d9d9d9"/>
<rect x="38" y="575" width="303" height="1" fill="#d9d9d9"/>
<rect x="292" y="387" width="1" height="247" fill="#d9d9d9"/>
<rect x="38" y="594" width="303" height="1" fill="#d9d9d9"/>
<rect x="305" y="387" width="1" height="247" fill="#d9d9d9"/>
<rect x="38" y="604" width="303" height="1" fill="#d9d9d9"/>
<rect x="317" y="387" width="1" height="247" fill="#d9d9d9"/>
<rect x="38" y="614" width="303" height="1" fill="#d9d9d9"/>
<rect x="329" y="387" width="1" height="247" fill="#d9d9d9"/>
<rect x="38" y="624" width="303" height="1" fill="#d9d9d9"/>
<rect x="98" y="387" width="1" height="247" fill="#808080"/>
<rect x="38" y="435" width="303" height="1" fill="#808080"/>
<rect x="159" y="387" width="1" height="247" fill="#808080"/>
<rect x="38" y="485" width="303" height="1" fill="#808080"/>
<rect x="219" y="387" width="1" height="247" fill="#808080"/>
<rect x="38" y="535" width="303" height="1" fill="#808080"/>
<rect x="280" y="387" width="1" height="247" fill="#808080"/>
<rect x="38" y="584" width="303" height="1" fill="#808080"/>
<rect x="37" y="386" width="305" height="1" fill="#000"/>
<rect x="37" y="634" width="305" height="1" fill="#000"/>
<rect x="37" y="386" width="1" height="249" fill="#000"/>
<rect x="341" y="386" width="1" height="249" fill="#000"/>
<rect x="35" y="386" width="2" height="1" fill="#000"/>
<rect x="37" y="635" width="1" height="2" fill="#000"/>
<rect x="35" y="435" width="2" height="1" fill="#000"/>
<rect x="98" y="635" width="1" height="2" fill="#000"/>
<rect x="35" y="485" width="2" height="1" fill="#000"/>
<rect x="159" y="635" width="1" height="2" fill="#000"/>
<rect x="35" y="535" width="2" height="1" fill="#000"/>
<rect x="219" y="635" width="1" height="2" fill="#000"/>
<rect x="35" y="584" width="2" height="1" fill="#000"/>
<rect x="280" y="635" width="1" height="2" fill="#000"/>
<rect x="35" y="634" width="2" height="1" fill="#000"/>
<rect x="341" y="635" width="1" height="2" fill="#000"/>
<text x="34.8" y="389.3" font-size="6" fill="#111" font-weight="normal" text-anchor="end" style="letter-spacing:-0.3px">1</text>
<text x="34.8" y="438.3" font-size="6" fill="#111" font-weight="normal" text-anchor="end" style="letter-spacing:-0.3px">0.8</text>
<text x="34.8" y="488.3" font-size="6" fill="#111" font-weight="normal" text-anchor="end" style="letter-spacing:-0.3px">0.6</text>
<text x="34.8" y="538.3" font-size="6" fill="#111" font-weight="normal" text-anchor="end" style="letter-spacing:-0.3px">0.4</text>
<text x="34.8" y="587.3" font-size="6" fill="#111" font-weight="normal" text-anchor="end" style="letter-spacing:-0.3px">0.2</text>
<text x="34.8" y="637.3" font-size="6" fill="#111" font-weight="normal" text-anchor="end" style="letter-spacing:-0.3px">0</text>
<text x="37.5" y="642" font-size="6.3" fill="#111" font-weight="normal" text-anchor="middle" style="letter-spacing:-0.4px">0</text>
<text x="98.3" y="642" font-size="6.3" fill="#111" font-weight="normal" text-anchor="middle" style="letter-spacing:-0.4px">2000</text>
<text x="159.1" y="642" font-size="6.3" fill="#111" font-weight="normal" text-anchor="middle" style="letter-spacing:-0.4px">4000</text>
<text x="219.9" y="642" font-size="6.3" fill="#111" font-weight="normal" text-anchor="middle" style="letter-spacing:-0.4px">6000</text>
<text x="280.7" y="642" font-size="6.3" fill="#111" font-weight="normal" text-anchor="middle" style="letter-spacing:-0.4px">8000</text>
<text x="341.5" y="642" font-size="6.3" fill="#111" font-weight="normal" text-anchor="middle" style="letter-spacing:-0.4px">10000</text>
<text x="189.5" y="381" font-size="9" fill="#262626" font-weight="normal" text-anchor="middle" textLength="73.5" lengthAdjust="spacingAndGlyphs" >Reliability vs. Time</text>
<text x="189.5" y="652.8" font-size="7.3" fill="#222" font-weight="normal" text-anchor="middle" >Hour (hr)</text>
<text transform="translate(19.8,510.5) rotate(-90)" font-size="6.4" fill="#333" text-anchor="middle" textLength="29.4" lengthAdjust="spacingAndGlyphs">Reliability</text>
<rect x="39" y="393" width="4" height="4" rx="0.9" fill="#000"/>
<rect x="40" y="394" width="2" height="2" fill="#0000ff"/>
<rect x="41" y="405" width="4" height="4" rx="0.9" fill="#000"/>
<rect x="42" y="406" width="2" height="2" fill="#0000ff"/>
<rect x="48" y="417" width="4" height="4" rx="0.9" fill="#000"/>
<rect x="49" y="418" width="2" height="2" fill="#0000ff"/>
<rect x="49" y="429" width="4" height="4" rx="0.9" fill="#000"/>
<rect x="50" y="430" width="2" height="2" fill="#0000ff"/>
<rect x="51" y="442" width="4" height="4" rx="0.9" fill="#000"/>
<rect x="52" y="443" width="2" height="2" fill="#0000ff"/>
<rect x="52" y="454" width="4" height="4" rx="0.9" fill="#000"/>
<rect x="53" y="455" width="2" height="2" fill="#0000ff"/>
<rect x="54" y="466" width="4" height="4" rx="0.9" fill="#000"/>
<rect x="55" y="467" width="2" height="2" fill="#0000ff"/>
<rect x="56" y="478" width="4" height="4" rx="0.9" fill="#000"/>
<rect x="57" y="479" width="2" height="2" fill="#0000ff"/>
<rect x="57" y="490" width="4" height="4" rx="0.9" fill="#000"/>
<rect x="58" y="491" width="2" height="2" fill="#0000ff"/>
<rect x="60" y="502" width="4" height="4" rx="0.9" fill="#000"/>
<rect x="61" y="503" width="2" height="2" fill="#0000ff"/>
<rect x="60" y="515" width="4" height="4" rx="0.9" fill="#000"/>
<rect x="61" y="516" width="2" height="2" fill="#0000ff"/>
<rect x="61" y="527" width="4" height="4" rx="0.9" fill="#000"/>
<rect x="62" y="528" width="2" height="2" fill="#0000ff"/>
<rect x="67" y="539" width="4" height="4" rx="0.9" fill="#000"/>
<rect x="68" y="540" width="2" height="2" fill="#0000ff"/>
<rect x="72" y="551" width="4" height="4" rx="0.9" fill="#000"/>
<rect x="73" y="552" width="2" height="2" fill="#0000ff"/>
<rect x="72" y="563" width="4" height="4" rx="0.9" fill="#000"/>
<rect x="73" y="564" width="2" height="2" fill="#0000ff"/>
<rect x="74" y="575" width="4" height="4" rx="0.9" fill="#000"/>
<rect x="75" y="576" width="2" height="2" fill="#0000ff"/>
<rect x="76" y="588" width="4" height="4" rx="0.9" fill="#000"/>
<rect x="77" y="589" width="2" height="2" fill="#0000ff"/>
<rect x="76" y="600" width="4" height="4" rx="0.9" fill="#000"/>
<rect x="77" y="601" width="2" height="2" fill="#0000ff"/>
<rect x="83" y="612" width="4" height="4" rx="0.9" fill="#000"/>
<rect x="84" y="613" width="2" height="2" fill="#0000ff"/>
<rect x="105" y="624" width="4" height="4" rx="0.9" fill="#000"/>
<rect x="106" y="625" width="2" height="2" fill="#0000ff"/>
<clipPath id="c2"><rect x="37" y="385" width="305" height="251"/></clipPath>
<polyline clip-path="url(#c2)" points="37.50,387.00 38.26,387.00 39.02,387.01 39.78,387.13 40.54,387.51 41.30,388.33 42.06,389.72 42.82,391.76 43.58,394.46 44.34,397.80 45.10,401.72 45.86,406.16 46.62,411.04 47.38,416.28 48.14,421.81 48.90,427.55 49.66,433.46 50.42,439.47 51.18,445.53 51.94,451.60 52.70,457.64 53.46,463.63 54.22,469.54 54.98,475.34 55.74,481.03 56.50,486.59 57.26,492.01 58.02,497.27 58.78,502.39 59.54,507.35 60.30,512.14 61.06,516.78 61.82,521.26 62.58,525.58 63.34,529.74 64.10,533.76 64.86,537.62 65.62,541.34 66.38,544.91 67.14,548.34 67.90,551.65 68.66,554.82 69.42,557.86 70.18,560.79 70.94,563.60 71.70,566.29 72.46,568.88 73.22,571.36 73.98,573.74 74.74,576.03 75.50,578.22 76.26,580.33 77.02,582.35 77.78,584.29 78.54,586.15 79.30,587.93 80.06,589.65 80.82,591.29 81.58,592.87 82.34,594.39 83.10,595.84 83.86,597.24 84.62,598.58 85.38,599.87 86.14,601.11 86.90,602.30 87.66,603.44 88.42,604.54 89.18,605.60 89.94,606.61 90.70,607.59 91.46,608.53 92.22,609.43 92.98,610.30 93.74,611.13 94.50,611.93 95.26,612.70 96.02,613.45 96.78,614.16 97.54,614.85 98.30,615.51 99.06,616.15 99.82,616.77 100.58,617.36 101.34,617.93 102.10,618.48 102.86,619.01 103.62,619.52 104.38,620.01 105.14,620.49 105.90,620.94 106.66,621.38 107.42,621.81 108.18,622.22 108.94,622.62 109.70,623.00 110.46,623.37 111.22,623.72 111.98,624.07 112.74,624.40 113.50,624.72 114.26,625.03 115.02,625.33 115.78,625.61 116.54,625.89 117.30,626.16 118.06,626.42 118.82,626.68 119.58,626.92 120.34,627.15 121.10,627.38 121.86,627.60 122.62,627.81 123.38,628.02 124.14,628.22 124.90,628.41 125.66,628.60 126.42,628.78 127.18,628.95 127.94,629.12 128.70,629.29 129.46,629.45 130.22,629.60 130.98,629.75 131.74,629.89 132.50,630.03 133.26,630.17 134.02,630.30 134.78,630.43 135.54,630.55 136.30,630.67 137.06,630.79 137.82,630.90 138.58,631.01 139.34,631.11 140.10,631.22 140.86,631.32 141.62,631.41 142.38,631.51 143.14,631.60 143.90,631.68 144.66,631.77 145.42,631.85 146.18,631.93 146.94,632.01 147.70,632.09 148.46,632.16 149.22,632.23 149.98,632.30 150.74,632.37 151.50,632.44 152.26,632.50 153.02,632.56 153.78,632.62 154.54,632.68 155.30,632.74 156.06,632.80 156.82,632.85 157.58,632.90 158.34,632.95 159.10,633.00 159.86,633.05 160.62,633.10 161.38,633.14 162.14,633.19 162.90,633.23 163.66,633.27 164.42,633.31 165.18,633.35 165.94,633.39 166.70,633.43 167.46,633.47 168.22,633.50 168.98,633.54 169.74,633.57 170.50,633.60 171.26,633.64 172.02,633.67 172.78,633.70 173.54,633.73 174.30,633.76 175.06,633.78 175.82,633.81 176.58,633.84 177.34,633.87 178.10,633.89 178.86,633.92 179.62,633.94 180.38,633.96 181.14,633.99 181.90,634.01 182.66,634.03 183.42,634.05 184.18,634.07 184.94,634.09 185.70,634.11 186.46,634.13 187.22,634.15 187.98,634.17 188.74,634.19 189.50,634.20 190.26,634.22 191.02,634.24 191.78,634.25 192.54,634.27 193.30,634.29 194.06,634.30 194.82,634.32 195.58,634.33 196.34,634.34 197.10,634.36 197.86,634.37 198.62,634.38 199.38,634.40 200.14,634.41 200.90,634.42 201.66,634.43 202.42,634.44 203.18,634.46 203.94,634.47 204.70,634.48 205.46,634.49 206.22,634.50 206.98,634.51 207.74,634.52 208.50,634.53 209.26,634.54 210.02,634.55 210.78,634.56 211.54,634.56 212.30,634.57 213.06,634.58 213.82,634.59 214.58,634.60 215.34,634.61 216.10,634.61 216.86,634.62 217.62,634.63 218.38,634.64 219.14,634.64 219.90,634.65 220.66,634.66 221.42,634.66 222.18,634.67 222.94,634.68 223.70,634.68 224.46,634.69 225.22,634.69 225.98,634.70 226.74,634.71 227.50,634.71 228.26,634.72 229.02,634.72 229.78,634.73 230.54,634.73 231.30,634.74 232.06,634.74 232.82,634.75 233.58,634.75 234.34,634.76 235.10,634.76 235.86,634.77 236.62,634.77 237.38,634.77 238.14,634.78 238.90,634.78 239.66,634.79 240.42,634.79 241.18,634.79 241.94,634.80 242.70,634.80 243.46,634.80 244.22,634.81 244.98,634.81 245.74,634.81 246.50,634.82 247.26,634.82 248.02,634.82 248.78,634.83 249.54,634.83 250.30,634.83 251.06,634.84 251.82,634.84 252.58,634.84 253.34,634.85 254.10,634.85 254.86,634.85 255.62,634.85 256.38,634.86 257.14,634.86 257.90,634.86 258.66,634.86 259.42,634.87 260.18,634.87 260.94,634.87 261.70,634.87 262.46,634.87 263.22,634.88 263.98,634.88 264.74,634.88 265.50,634.88 266.26,634.88 267.02,634.89 267.78,634.89 268.54,634.89 269.30,634.89 270.06,634.89 270.82,634.90 271.58,634.90 272.34,634.90 273.10,634.90 273.86,634.90 274.62,634.90 275.38,634.91 276.14,634.91 276.90,634.91 277.66,634.91 278.42,634.91 279.18,634.91 279.94,634.91 280.70,634.92 281.46,634.92 282.22,634.92 282.98,634.92 283.74,634.92 284.50,634.92 285.26,634.92 286.02,634.92 286.78,634.93 287.54,634.93 288.30,634.93 289.06,634.93 289.82,634.93 290.58,634.93 291.34,634.93 292.10,634.93 292.86,634.93 293.62,634.94 294.38,634.94 295.14,634.94 295.90,634.94 296.66,634.94 297.42,634.94 298.18,634.94 298.94,634.94 299.70,634.94 300.46,634.94 301.22,634.95 301.98,634.95 302.74,634.95 303.50,634.95 304.26,634.95 305.02,634.95 305.78,634.95 306.54,634.95 307.30,634.95 308.06,634.95 308.82,634.95 309.58,634.95 310.34,634.95 311.10,634.96 311.86,634.96 312.62,634.96 313.38,634.96 314.14,634.96 314.90,634.96 315.66,634.96 316.42,634.96 317.18,634.96 317.94,634.96 318.70,634.96 319.46,634.96 320.22,634.96 320.98,634.96 321.74,634.96 322.50,634.96 323.26,634.96 324.02,634.97 324.78,634.97 325.54,634.97 326.30,634.97 327.06,634.97 327.82,634.97 328.58,634.97 329.34,634.97 330.10,634.97 330.86,634.97 331.62,634.97 332.38,634.97 333.14,634.97 333.90,634.97 334.66,634.97 335.42,634.97 336.18,634.97 336.94,634.97 337.70,634.97 338.46,634.97 339.22,634.97 339.98,634.97 340.74,634.97 341.50,634.98" fill="none" stroke="#0000ff" stroke-width="2.1" stroke-linejoin="round" shape-rendering="crispEdges"/>
<text x="347" y="390.2" font-size="4.9" fill="#2a2a2a" font-weight="normal" text-anchor="start" textLength="20.5" lengthAdjust="spacingAndGlyphs" >Reliability</text>
<rect x="347" y="391" width="44" height="1" fill="#000"/>
<text x="347" y="396.9" font-size="4.9" fill="#2a2a2a" font-weight="normal" text-anchor="start" textLength="21" lengthAdjust="spacingAndGlyphs" >Complete</text>
<text x="347" y="402.0" font-size="4.9" fill="#2a2a2a" font-weight="normal" text-anchor="start" >Lognormal</text>
<text x="347" y="407.2" font-size="4.9" fill="#2a2a2a" font-weight="normal" text-anchor="start" textLength="40" lengthAdjust="spacingAndGlyphs" >RRX SRM FM MED</text>
<text x="347" y="411.2" font-size="4.9" fill="#2a2a2a" font-weight="normal" text-anchor="start" textLength="22.5" lengthAdjust="spacingAndGlyphs" >F=20/S=0</text>
<path d="M350.5 412 L352.5 414 L350.5 416 L348.5 414 Z" fill="#000"/>
<rect x="350" y="413" width="1" height="2" fill="#0000ff"/>
<text x="355" y="415.8" font-size="4.9" fill="#2a2a2a" font-weight="normal" text-anchor="start" textLength="25" lengthAdjust="spacingAndGlyphs" >Data Points</text>
<rect x="347" y="418" width="6" height="2" fill="#0000ff"/>
<text x="355" y="420.8" font-size="4.9" fill="#2a2a2a" font-weight="normal" text-anchor="start" textLength="32" lengthAdjust="spacingAndGlyphs" >Reliability Line</text>
<rect x="347" y="421" width="44" height="1" fill="#000"/>
<text x="10" y="663.9" font-size="5.6" fill="#000" font-weight="normal" text-anchor="start" textLength="126" lengthAdjust="spacingAndGlyphs" >Log-Mean=6.610685, Log-Std=0.686089, Rho=0.963622</text>
<rect x="413" y="367" width="388" height="298" fill="#fff"/>
<rect x="413" y="367" width="388" height="1" fill="#000"/>
<rect x="413" y="664" width="388" height="1" fill="#000"/>
<rect x="413" y="367" width="1" height="298" fill="#000"/>
<rect x="800" y="367" width="1" height="298" fill="#000"/>
<rect x="413" y="659" width="388" height="1" fill="#000"/>
<rect x="453" y="387" width="1" height="247" fill="#d9d9d9"/>
<rect x="442" y="396" width="304" height="1" fill="#d9d9d9"/>
<rect x="465" y="387" width="1" height="247" fill="#d9d9d9"/>
<rect x="442" y="406" width="304" height="1" fill="#d9d9d9"/>
<rect x="478" y="387" width="1" height="247" fill="#d9d9d9"/>
<rect x="442" y="416" width="304" height="1" fill="#d9d9d9"/>
<rect x="490" y="387" width="1" height="247" fill="#d9d9d9"/>
<rect x="442" y="426" width="304" height="1" fill="#d9d9d9"/>
<rect x="514" y="387" width="1" height="247" fill="#d9d9d9"/>
<rect x="442" y="445" width="304" height="1" fill="#d9d9d9"/>
<rect x="526" y="387" width="1" height="247" fill="#d9d9d9"/>
<rect x="442" y="455" width="304" height="1" fill="#d9d9d9"/>
<rect x="539" y="387" width="1" height="247" fill="#d9d9d9"/>
<rect x="442" y="465" width="304" height="1" fill="#d9d9d9"/>
<rect x="551" y="387" width="1" height="247" fill="#d9d9d9"/>
<rect x="442" y="475" width="304" height="1" fill="#d9d9d9"/>
<rect x="575" y="387" width="1" height="247" fill="#d9d9d9"/>
<rect x="442" y="495" width="304" height="1" fill="#d9d9d9"/>
<rect x="587" y="387" width="1" height="247" fill="#d9d9d9"/>
<rect x="442" y="505" width="304" height="1" fill="#d9d9d9"/>
<rect x="599" y="387" width="1" height="247" fill="#d9d9d9"/>
<rect x="442" y="515" width="304" height="1" fill="#d9d9d9"/>
<rect x="612" y="387" width="1" height="247" fill="#d9d9d9"/>
<rect x="442" y="525" width="304" height="1" fill="#d9d9d9"/>
<rect x="636" y="387" width="1" height="247" fill="#d9d9d9"/>
<rect x="442" y="545" width="304" height="1" fill="#d9d9d9"/>
<rect x="648" y="387" width="1" height="247" fill="#d9d9d9"/>
<rect x="442" y="555" width="304" height="1" fill="#d9d9d9"/>
<rect x="660" y="387" width="1" height="247" fill="#d9d9d9"/>
<rect x="442" y="565" width="304" height="1" fill="#d9d9d9"/>
<rect x="673" y="387" width="1" height="247" fill="#d9d9d9"/>
<rect x="442" y="575" width="304" height="1" fill="#d9d9d9"/>
<rect x="697" y="387" width="1" height="247" fill="#d9d9d9"/>
<rect x="442" y="594" width="304" height="1" fill="#d9d9d9"/>
<rect x="709" y="387" width="1" height="247" fill="#d9d9d9"/>
<rect x="442" y="604" width="304" height="1" fill="#d9d9d9"/>
<rect x="721" y="387" width="1" height="247" fill="#d9d9d9"/>
<rect x="442" y="614" width="304" height="1" fill="#d9d9d9"/>
<rect x="734" y="387" width="1" height="247" fill="#d9d9d9"/>
<rect x="442" y="624" width="304" height="1" fill="#d9d9d9"/>
<rect x="502" y="387" width="1" height="247" fill="#808080"/>
<rect x="442" y="435" width="304" height="1" fill="#808080"/>
<rect x="563" y="387" width="1" height="247" fill="#808080"/>
<rect x="442" y="485" width="304" height="1" fill="#808080"/>
<rect x="624" y="387" width="1" height="247" fill="#808080"/>
<rect x="442" y="535" width="304" height="1" fill="#808080"/>
<rect x="685" y="387" width="1" height="247" fill="#808080"/>
<rect x="442" y="584" width="304" height="1" fill="#808080"/>
<rect x="441" y="386" width="306" height="1" fill="#000"/>
<rect x="441" y="634" width="306" height="1" fill="#000"/>
<rect x="441" y="386" width="1" height="249" fill="#000"/>
<rect x="746" y="386" width="1" height="249" fill="#000"/>
<rect x="439" y="386" width="2" height="1" fill="#000"/>
<rect x="441" y="635" width="1" height="2" fill="#000"/>
<rect x="439" y="435" width="2" height="1" fill="#000"/>
<rect x="502" y="635" width="1" height="2" fill="#000"/>
<rect x="439" y="485" width="2" height="1" fill="#000"/>
<rect x="563" y="635" width="1" height="2" fill="#000"/>
<rect x="439" y="535" width="2" height="1" fill="#000"/>
<rect x="624" y="635" width="1" height="2" fill="#000"/>
<rect x="439" y="584" width="2" height="1" fill="#000"/>
<rect x="685" y="635" width="1" height="2" fill="#000"/>
<rect x="439" y="634" width="2" height="1" fill="#000"/>
<rect x="746" y="635" width="1" height="2" fill="#000"/>
<text x="438.8" y="389.3" font-size="6" fill="#111" font-weight="normal" text-anchor="end" style="letter-spacing:-0.3px">1</text>
<text x="438.8" y="438.3" font-size="6" fill="#111" font-weight="normal" text-anchor="end" style="letter-spacing:-0.3px">0.8</text>
<text x="438.8" y="488.3" font-size="6" fill="#111" font-weight="normal" text-anchor="end" style="letter-spacing:-0.3px">0.6</text>
<text x="438.8" y="538.3" font-size="6" fill="#111" font-weight="normal" text-anchor="end" style="letter-spacing:-0.3px">0.4</text>
<text x="438.8" y="587.3" font-size="6" fill="#111" font-weight="normal" text-anchor="end" style="letter-spacing:-0.3px">0.2</text>
<text x="438.8" y="637.3" font-size="6" fill="#111" font-weight="normal" text-anchor="end" style="letter-spacing:-0.3px">0</text>
<text x="441.5" y="642" font-size="6.3" fill="#111" font-weight="normal" text-anchor="middle" style="letter-spacing:-0.4px">0</text>
<text x="502.5" y="642" font-size="6.3" fill="#111" font-weight="normal" text-anchor="middle" style="letter-spacing:-0.4px">1400</text>
<text x="563.5" y="642" font-size="6.3" fill="#111" font-weight="normal" text-anchor="middle" style="letter-spacing:-0.4px">2800</text>
<text x="624.5" y="642" font-size="6.3" fill="#111" font-weight="normal" text-anchor="middle" style="letter-spacing:-0.4px">4200</text>
<text x="685.5" y="642" font-size="6.3" fill="#111" font-weight="normal" text-anchor="middle" style="letter-spacing:-0.4px">5600</text>
<text x="746.5" y="642" font-size="6.3" fill="#111" font-weight="normal" text-anchor="middle" style="letter-spacing:-0.4px">7000</text>
<text x="594.0" y="381" font-size="9" fill="#262626" font-weight="normal" text-anchor="middle" textLength="73.5" lengthAdjust="spacingAndGlyphs" >Reliability vs. Time</text>
<text x="594.0" y="652.8" font-size="7.3" fill="#222" font-weight="normal" text-anchor="middle" >Hour (hr)</text>
<text transform="translate(423.8,510.5) rotate(-90)" font-size="6.4" fill="#333" text-anchor="middle" textLength="29.4" lengthAdjust="spacingAndGlyphs">Reliability</text>
<rect x="445" y="393" width="4" height="4" rx="0.9" fill="#000"/>
<rect x="446" y="394" width="2" height="2" fill="#0000ff"/>
<rect x="447" y="405" width="4" height="4" rx="0.9" fill="#000"/>
<rect x="448" y="406" width="2" height="2" fill="#0000ff"/>
<rect x="458" y="417" width="4" height="4" rx="0.9" fill="#000"/>
<rect x="459" y="418" width="2" height="2" fill="#0000ff"/>
<rect x="459" y="429" width="4" height="4" rx="0.9" fill="#000"/>
<rect x="460" y="430" width="2" height="2" fill="#0000ff"/>
<rect x="462" y="442" width="4" height="4" rx="0.9" fill="#000"/>
<rect x="463" y="443" width="2" height="2" fill="#0000ff"/>
<rect x="463" y="454" width="4" height="4" rx="0.9" fill="#000"/>
<rect x="464" y="455" width="2" height="2" fill="#0000ff"/>
<rect x="466" y="466" width="4" height="4" rx="0.9" fill="#000"/>
<rect x="467" y="467" width="2" height="2" fill="#0000ff"/>
<rect x="469" y="478" width="4" height="4" rx="0.9" fill="#000"/>
<rect x="470" y="479" width="2" height="2" fill="#0000ff"/>
<rect x="470" y="490" width="4" height="4" rx="0.9" fill="#000"/>
<rect x="471" y="491" width="2" height="2" fill="#0000ff"/>
<rect x="474" y="502" width="4" height="4" rx="0.9" fill="#000"/>
<rect x="475" y="503" width="2" height="2" fill="#0000ff"/>
<rect x="475" y="515" width="4" height="4" rx="0.9" fill="#000"/>
<rect x="476" y="516" width="2" height="2" fill="#0000ff"/>
<rect x="477" y="527" width="4" height="4" rx="0.9" fill="#000"/>
<rect x="478" y="528" width="2" height="2" fill="#0000ff"/>
<rect x="485" y="539" width="4" height="4" rx="0.9" fill="#000"/>
<rect x="486" y="540" width="2" height="2" fill="#0000ff"/>
<rect x="492" y="551" width="4" height="4" rx="0.9" fill="#000"/>
<rect x="493" y="552" width="2" height="2" fill="#0000ff"/>
<rect x="492" y="563" width="4" height="4" rx="0.9" fill="#000"/>
<rect x="493" y="564" width="2" height="2" fill="#0000ff"/>
<rect x="495" y="575" width="4" height="4" rx="0.9" fill="#000"/>
<rect x="496" y="576" width="2" height="2" fill="#0000ff"/>
<rect x="497" y="588" width="4" height="4" rx="0.9" fill="#000"/>
<rect x="498" y="589" width="2" height="2" fill="#0000ff"/>
<rect x="498" y="600" width="4" height="4" rx="0.9" fill="#000"/>
<rect x="499" y="601" width="2" height="2" fill="#0000ff"/>
<rect x="507" y="612" width="4" height="4" rx="0.9" fill="#000"/>
<rect x="508" y="613" width="2" height="2" fill="#0000ff"/>
<rect x="539" y="624" width="4" height="4" rx="0.9" fill="#000"/>
<rect x="540" y="625" width="2" height="2" fill="#0000ff"/>
<clipPath id="c3"><rect x="441" y="385" width="306" height="251"/></clipPath>
<polyline clip-path="url(#c3)" points="447.60,387.00 447.60,387.00 448.36,393.12 449.12,399.10 449.89,404.92 450.65,410.60 451.41,416.14 452.18,421.54 452.94,426.81 453.70,431.95 454.46,436.97 455.23,441.86 455.99,446.63 456.75,451.28 457.51,455.81 458.27,460.24 459.04,464.55 459.80,468.76 460.56,472.87 461.32,476.87 462.09,480.77 462.85,484.58 463.61,488.29 464.38,491.92 465.14,495.45 465.90,498.89 466.66,502.26 467.43,505.53 468.19,508.73 468.95,511.85 469.71,514.89 470.48,517.85 471.24,520.75 472.00,523.57 472.76,526.32 473.52,529.00 474.29,531.62 475.05,534.17 475.81,536.66 476.57,539.09 477.34,541.46 478.10,543.77 478.86,546.02 479.62,548.22 480.39,550.36 481.15,552.45 481.91,554.49 482.68,556.47 483.44,558.41 484.20,560.30 484.96,562.15 485.73,563.95 486.49,565.70 487.25,567.41 488.01,569.08 488.77,570.71 489.54,572.30 490.30,573.84 491.06,575.35 491.82,576.83 492.59,578.26 493.35,579.66 494.11,581.03 494.88,582.36 495.64,583.66 496.40,584.93 497.16,586.17 497.93,587.37 498.69,588.55 499.45,589.69 500.21,590.81 500.98,591.90 501.74,592.97 502.50,594.01 503.26,595.02 504.02,596.01 504.79,596.97 505.55,597.91 506.31,598.82 507.07,599.72 507.84,600.59 508.60,601.44 509.36,602.27 510.12,603.07 510.89,603.86 511.65,604.63 512.41,605.38 513.17,606.11 513.94,606.83 514.70,607.52 515.46,608.20 516.23,608.86 516.99,609.51 517.75,610.14 518.51,610.75 519.27,611.35 520.04,611.93 520.80,612.50 521.56,613.06 522.33,613.60 523.09,614.13 523.85,614.64 524.61,615.15 525.38,615.64 526.14,616.11 526.90,616.58 527.66,617.03 528.42,617.48 529.19,617.91 529.95,618.33 530.71,618.74 531.48,619.15 532.24,619.54 533.00,619.92 533.76,620.29 534.52,620.65 535.29,621.01 536.05,621.35 536.81,621.69 537.58,622.02 538.34,622.34 539.10,622.65 539.86,622.96 540.62,623.25 541.39,623.54 542.15,623.83 542.91,624.10 543.67,624.37 544.44,624.64 545.20,624.89 545.96,625.14 546.73,625.38 547.49,625.62 548.25,625.85 549.01,626.08 549.77,626.30 550.54,626.51 551.30,626.72 552.06,626.93 552.83,627.13 553.59,627.32 554.35,627.51 555.11,627.70 555.88,627.88 556.64,628.05 557.40,628.22 558.16,628.39 558.92,628.55 559.69,628.71 560.45,628.87 561.21,629.02 561.98,629.17 562.74,629.31 563.50,629.45 564.26,629.59 565.02,629.72 565.79,629.85 566.55,629.98 567.31,630.10 568.08,630.22 568.84,630.34 569.60,630.46 570.36,630.57 571.12,630.68 571.89,630.79 572.65,630.89 573.41,630.99 574.17,631.09 574.94,631.19 575.70,631.28 576.46,631.37 577.23,631.46 577.99,631.55 578.75,631.63 579.51,631.72 580.27,631.80 581.04,631.88 581.80,631.96 582.56,632.03 583.33,632.10 584.09,632.18 584.85,632.24 585.61,632.31 586.38,632.38 587.14,632.44 587.90,632.51 588.66,632.57 589.42,632.63 590.19,632.69 590.95,632.74 591.71,632.80 592.48,632.85 593.24,632.91 594.00,632.96 594.76,633.01 595.52,633.06 596.29,633.11 597.05,633.15 597.81,633.20 598.58,633.24 599.34,633.29 600.10,633.33 600.86,633.37 601.62,633.41 602.39,633.45 603.15,633.49 603.91,633.53 604.67,633.56 605.44,633.60 606.20,633.63 606.96,633.67 607.73,633.70 608.49,633.73 609.25,633.76 610.01,633.79 610.77,633.82 611.54,633.85 612.30,633.88 613.06,633.91 613.83,633.93 614.59,633.96 615.35,633.99 616.11,634.01 616.88,634.04 617.64,634.06 618.40,634.08 619.16,634.11 619.92,634.13 620.69,634.15 621.45,634.17 622.21,634.19 622.98,634.21 623.74,634.23 624.50,634.25 625.26,634.27 626.02,634.29 626.79,634.30 627.55,634.32 628.31,634.34 629.08,634.35 629.84,634.37 630.60,634.39 631.36,634.40 632.12,634.42 632.89,634.43 633.65,634.44 634.41,634.46 635.17,634.47 635.94,634.48 636.70,634.50 637.46,634.51 638.23,634.52 638.99,634.53 639.75,634.54 640.51,634.56 641.27,634.57 642.04,634.58 642.80,634.59 643.56,634.60 644.33,634.61 645.09,634.62 645.85,634.63 646.61,634.64 647.38,634.65 648.14,634.65 648.90,634.66 649.66,634.67 650.42,634.68 651.19,634.69 651.95,634.69 652.71,634.70 653.48,634.71 654.24,634.72 655.00,634.72 655.76,634.73 656.52,634.74 657.29,634.74 658.05,634.75 658.81,634.76 659.58,634.76 660.34,634.77 661.10,634.77 661.86,634.78 662.62,634.78 663.39,634.79 664.15,634.80 664.91,634.80 665.67,634.81 666.44,634.81 667.20,634.81 667.96,634.82 668.73,634.82 669.49,634.83 670.25,634.83 671.01,634.84 671.77,634.84 672.54,634.84 673.30,634.85 674.06,634.85 674.83,634.86 675.59,634.86 676.35,634.86 677.11,634.87 677.88,634.87 678.64,634.87 679.40,634.88 680.16,634.88 680.92,634.88 681.69,634.88 682.45,634.89 683.21,634.89 683.98,634.89 684.74,634.90 685.50,634.90 686.26,634.90 687.02,634.90 687.79,634.91 688.55,634.91 689.31,634.91 690.08,634.91 690.84,634.91 691.60,634.92 692.36,634.92 693.12,634.92 693.89,634.92 694.65,634.92 695.41,634.93 696.17,634.93 696.94,634.93 697.70,634.93 698.46,634.93 699.23,634.94 699.99,634.94 700.75,634.94 701.51,634.94 702.27,634.94 703.04,634.94 703.80,634.94 704.56,634.95 705.33,634.95 706.09,634.95 706.85,634.95 707.61,634.95 708.38,634.95 709.14,634.95 709.90,634.95 710.66,634.96 711.42,634.96 712.19,634.96 712.95,634.96 713.71,634.96 714.48,634.96 715.24,634.96 716.00,634.96 716.76,634.96 717.52,634.96 718.29,634.97 719.05,634.97 719.81,634.97 720.58,634.97 721.34,634.97 722.10,634.97 722.86,634.97 723.62,634.97 724.39,634.97 725.15,634.97 725.91,634.97 726.67,634.97 727.44,634.97 728.20,634.97 728.96,634.98 729.73,634.98 730.49,634.98 731.25,634.98 732.01,634.98 732.77,634.98 733.54,634.98 734.30,634.98 735.06,634.98 735.83,634.98 736.59,634.98 737.35,634.98 738.11,634.98 738.88,634.98 739.64,634.98 740.40,634.98 741.16,634.98 741.92,634.98 742.69,634.98 743.45,634.98 744.21,634.99 744.98,634.99 745.74,634.99 746.50,634.99" fill="none" stroke="#0000ff" stroke-width="2.1" stroke-linejoin="round" shape-rendering="crispEdges"/>
<text x="752" y="390.2" font-size="4.9" fill="#2a2a2a" font-weight="normal" text-anchor="start" textLength="20.5" lengthAdjust="spacingAndGlyphs" >Reliability</text>
<rect x="752" y="391" width="44" height="1" fill="#000"/>
<text x="752" y="396.9" font-size="4.9" fill="#2a2a2a" font-weight="normal" text-anchor="start" textLength="21" lengthAdjust="spacingAndGlyphs" >Complete</text>
<text x="752" y="402.0" font-size="4.9" fill="#2a2a2a" font-weight="normal" text-anchor="start" >2P-Exponential</text>
<text x="752" y="407.2" font-size="4.9" fill="#2a2a2a" font-weight="normal" text-anchor="start" textLength="40" lengthAdjust="spacingAndGlyphs" >RRX SRM FM MED</text>
<text x="752" y="411.2" font-size="4.9" fill="#2a2a2a" font-weight="normal" text-anchor="start" textLength="22.5" lengthAdjust="spacingAndGlyphs" >F=20/S=0</text>
<path d="M755.5 412 L757.5 414 L755.5 416 L753.5 414 Z" fill="#000"/>
<rect x="755" y="413" width="1" height="2" fill="#0000ff"/>
<text x="760" y="415.8" font-size="4.9" fill="#2a2a2a" font-weight="normal" text-anchor="start" textLength="25" lengthAdjust="spacingAndGlyphs" >Data Points</text>
<rect x="752" y="418" width="6" height="2" fill="#0000ff"/>
<text x="760" y="420.8" font-size="4.9" fill="#2a2a2a" font-weight="normal" text-anchor="start" textLength="32" lengthAdjust="spacingAndGlyphs" >Reliability Line</text>
<rect x="752" y="421" width="44" height="1" fill="#000"/>
<text x="414" y="663.9" font-size="5.6" fill="#000" font-weight="normal" text-anchor="start" textLength="141" lengthAdjust="spacingAndGlyphs" >Mean Time=685.642604, Gamma=140.000000, Rho=-0.898581</text>
<rect x="5" y="36" width="397" height="2" fill="#0000ff"/>
<rect x="5" y="350" width="397" height="2" fill="#0000ff"/>
<rect x="5" y="36" width="2" height="316" fill="#0000ff"/>
<rect x="400" y="36" width="2" height="316" fill="#0000ff"/>
<rect x="405" y="32" width="1" height="648" fill="#a0a0a0"/>
<rect x="1" y="355" width="809" height="1" fill="#a0a0a0"/>
<rect x="810" y="32" width="1" height="648" fill="#a0a0a0"/>
<rect x="0" y="0" width="1062" height="1" fill="#475e62"/>
<rect x="0" y="680" width="1062" height="1" fill="#475e62"/>
<rect x="0" y="0" width="1" height="681" fill="#475e62"/>
<rect x="1061" y="0" width="1" height="681" fill="#475e62"/>
<rect x="1" y="31" width="1060" height="1" fill="#475e62"/>
<rect x="1" y="32" width="1060" height="1" fill="#c4c4c4"/>
<rect x="1" y="32" width="1" height="648" fill="#a8a8a8"/>
<rect x="1" y="679" width="1060" height="1" fill="#b0b0b0"/>
<text x="30" y="20.2" font-size="11.6" fill="#151515" font-weight="bold" text-anchor="start" textLength="103" lengthAdjust="spacingAndGlyphs" >Side-by-Side Plot1</text>
<g>
<rect x="9.5" y="8.5" width="15" height="15" fill="#eef2f5" stroke="#b4b4b4"/>
<line x1="17" y1="9" x2="17" y2="23" stroke="#d0d4d8"/><line x1="10" y1="16" x2="24" y2="16" stroke="#d0d4d8"/>
<path d="M10.5 15 L16 9.5" stroke="#d23c3c" stroke-width="1.3" fill="none"/>
<path d="M18 14.5 Q21.5 14.5 22.3 12.5 L23.5 9" stroke="#3a9a32" stroke-width="1.3" fill="none"/>
<path d="M9.8 22 Q11 18.5 12.5 18.5 Q14.5 18.5 15.5 21 Q16.2 22.8 17.5 22.5" stroke="#3a6fb8" stroke-width="1.3" fill="none"/>
<path d="M17.5 22.5 Q19 21 20.5 21 Q22 20.5 22.5 19.5 Q23.5 18.5 24 17.5" stroke="#404040" stroke-width="1.1" fill="none"/>
</g>
<rect x="953" y="16" width="8" height="1" fill="#222"/>
<rect x="995.5" y="12.5" width="7" height="7" fill="none" stroke="#222" stroke-width="1"/>
<path d="M1037.3 12.3 L1045.2 20.2 M1045.2 12.3 L1037.3 20.2" stroke="#222" stroke-width="1.1"/>
<g transform="translate(821,37) scale(0.8)"><rect x="0" y="0" width="20" height="20" fill="#e9eef2"/><rect x="0" y="0" width="20" height="1" fill="#a9a9a9"/><rect x="19" y="0" width="1" height="20" fill="#b9b9b9"/><rect x="0" y="0" width="2" height="20" fill="#6a6a6a"/><rect x="0" y="18" width="20" height="2" fill="#5e5e5e"/><path d="M1.5 18.5 L19.5 1" stroke="#1f52a5" stroke-width="1.8" stroke-dasharray="1.2 0.5"/><circle cx="4.2" cy="12.4" r="1.9" fill="#cc2222"/><circle cx="13" cy="11.2" r="1.9" fill="#cc2222"/><circle cx="15.2" cy="3.5" r="1.9" fill="#cc2222"/></g>
<text x="847" y="49.2" font-size="11.6" fill="#56687a" font-weight="bold" text-anchor="start" textLength="21.5" lengthAdjust="spacingAndGlyphs" >Plot</text>
<path d="M1046.5 41.5 L1049.5 44.7 L1046.5 48" stroke="#555" stroke-width="1.1" fill="none"/>
<rect x="811" y="58" width="250" height="28" fill="#0c4e9e"/>
<rect x="811" y="58" width="250" height="1" fill="#5f5b55"/>
<rect x="1060" y="58" width="1" height="28" fill="#707070"/>
<rect x="811" y="58" width="1" height="28" fill="#606060"/>
<rect x="811" y="85" width="250" height="1" fill="#8a8a8a"/>
<text x="936" y="76.6" font-size="16" fill="#fff" font-weight="bold" text-anchor="middle" textLength="135" lengthAdjust="spacingAndGlyphs" >Side-By-Side Plot</text>
<g transform="translate(817,92) scale(1.0)"><rect x="0" y="0" width="20" height="20" fill="#e9eef2"/><rect x="0" y="0" width="20" height="1" fill="#a9a9a9"/><rect x="19" y="0" width="1" height="20" fill="#b9b9b9"/><rect x="0" y="0" width="2" height="20" fill="#6a6a6a"/><rect x="0" y="18" width="20" height="2" fill="#5e5e5e"/><path d="M1.5 18.5 L19.5 1" stroke="#1f52a5" stroke-width="1.8" stroke-dasharray="1.2 0.5"/><circle cx="4.2" cy="12.4" r="1.9" fill="#cc2222"/><circle cx="13" cy="11.2" r="1.9" fill="#cc2222"/><circle cx="15.2" cy="3.5" r="1.9" fill="#cc2222"/></g>
<g transform="translate(817,119)"><rect x="0" y="0" width="18" height="18" fill="#e9eef2"/><rect x="0" y="0" width="18" height="1" fill="#a9a9a9"/><rect x="17" y="0" width="1" height="12" fill="#b9b9b9"/><rect x="0" y="0" width="2" height="18" fill="#6a6a6a"/><rect x="0" y="16" width="12" height="2" fill="#5e5e5e"/><path d="M1.5 16.5 L17 1" stroke="#2a62b5" stroke-width="1.8"/><circle cx="3.8" cy="10.8" r="1.8" fill="#cc2222"/><circle cx="11.5" cy="9.8" r="1.8" fill="#cc2222"/><circle cx="13" cy="3" r="1.8" fill="#cc2222"/><circle cx="14.6" cy="14.4" r="4" fill="none" stroke="#555" stroke-width="2.6" stroke-dasharray="1.6 1.54"/><circle cx="14.6" cy="14.4" r="3.1" fill="none" stroke="#555" stroke-width="1.8"/><circle cx="14.6" cy="14.4" r="1.4" fill="#fff"/></g>
<g transform="translate(817,146)"><rect x="0.5" y="0.5" width="19" height="17" fill="#fafcfd" stroke="#a8a8a8"/><line x1="1" y1="5.5" x2="19" y2="5.5" stroke="#c8c8c8"/><line x1="1" y1="9.5" x2="19" y2="9.5" stroke="#c8c8c8"/><line x1="9.5" y1="1" x2="9.5" y2="17" stroke="#e0e0e0"/><text x="3" y="4.8" font-size="4.2" fill="#4b7bc0" font-weight="bold">20</text><text x="14" y="4.8" font-size="4.2" fill="#4b7bc0">1</text><text x="3" y="9" font-size="4.2" fill="#4b7bc0" font-weight="bold">50</text><text x="14" y="9" font-size="4.2" fill="#4b7bc0">2</text><text x="3" y="13" font-size="4.2" fill="#4b7bc0" font-weight="bold">65</text><path d="M7 14.5 L10.3 17.6 L18.5 9.6" stroke="#1e1e1e" stroke-width="2.8" fill="none"/></g>
<rect x="843" y="89" width="215" height="1" fill="#a0a0a0"/>
<rect x="843" y="168" width="215" height="1" fill="#a0a0a0"/>
<rect x="843" y="89" width="1" height="80" fill="#a0a0a0"/>
<rect x="1057" y="89" width="1" height="80" fill="#a0a0a0"/>
<rect x="848" y="96" width="16" height="1" fill="#a8a8a8"/>
<rect x="848" y="111" width="16" height="1" fill="#a8a8a8"/>
<rect x="848" y="96" width="1" height="16" fill="#a8a8a8"/>
<rect x="863" y="96" width="1" height="16" fill="#a8a8a8"/>
<path d="M851.8 104 L854.6 107.3 L859.8 99.5" stroke="#111" stroke-width="1.2" fill="none"/>
<text x="866.5" y="107.6" font-size="11" fill="#111" font-weight="normal" text-anchor="start" textLength="87.5" lengthAdjust="spacingAndGlyphs" >Keep Aspect Ratio</text>
<text x="849.7" y="129.6" font-size="11" fill="#1a1aff" font-weight="normal" text-anchor="start" textLength="102.6" lengthAdjust="spacingAndGlyphs" >Confidence Bounds...</text>
<rect x="850" y="131" width="103" height="1" fill="#1a1aff"/>
<rect x="814" y="175" width="244" height="1" fill="#a0a0a0"/>
<rect x="814" y="230" width="244" height="1" fill="#a0a0a0"/>
<rect x="814" y="175" width="1" height="56" fill="#a0a0a0"/>
<rect x="1057" y="175" width="1" height="56" fill="#a0a0a0"/>
<rect x="815" y="176" width="242" height="25" fill="#f0f0f0"/>
<text x="825.8" y="191.6" font-size="12" fill="#111" font-weight="bold" text-anchor="start" textLength="39.7" lengthAdjust="spacingAndGlyphs" >Scaling</text>
<text x="820" y="218.8" font-size="11" fill="#1a1a3a" font-weight="normal" text-anchor="start" textLength="5.6" lengthAdjust="spacingAndGlyphs" >X</text>
<rect x="835" y="205" width="92" height="1" fill="#a0a0a0"/>
<rect x="835" y="224" width="92" height="1" fill="#a0a0a0"/>
<rect x="835" y="205" width="1" height="20" fill="#a0a0a0"/>
<rect x="926" y="205" width="1" height="20" fill="#a0a0a0"/>
<rect x="933" y="205" width="92" height="1" fill="#a0a0a0"/>
<rect x="933" y="224" width="92" height="1" fill="#a0a0a0"/>
<rect x="933" y="205" width="1" height="20" fill="#a0a0a0"/>
<rect x="1024" y="205" width="1" height="20" fill="#a0a0a0"/>
<text x="841" y="218.8" font-size="11" fill="#7a7a7a" font-weight="normal" text-anchor="start" >0</text>
<text x="939" y="218.8" font-size="11" fill="#7a7a7a" font-weight="normal" text-anchor="start" textLength="21.5" lengthAdjust="spacingAndGlyphs" >4000</text>
<rect x="1031" y="208" width="16" height="1" fill="#a8a8a8"/>
<rect x="1031" y="223" width="16" height="1" fill="#a8a8a8"/>
<rect x="1031" y="208" width="1" height="16" fill="#a8a8a8"/>
<rect x="1046" y="208" width="1" height="16" fill="#a8a8a8"/>
<path d="M1034.8 216 L1037.6 219.3 L1042.8 211.5" stroke="#111" stroke-width="1.2" fill="none"/>
<rect x="814" y="237" width="244" height="1" fill="#a0a0a0"/>
<rect x="814" y="328" width="244" height="1" fill="#a0a0a0"/>
<rect x="814" y="237" width="1" height="92" fill="#a0a0a0"/>
<rect x="1057" y="237" width="1" height="92" fill="#a0a0a0"/>
<rect x="815" y="238" width="242" height="25" fill="#f0f0f0"/>
<text x="825.8" y="253.6" font-size="12" fill="#111" font-weight="bold" text-anchor="start" textLength="26" lengthAdjust="spacingAndGlyphs" >Vary</text>
<circle cx="826.8" cy="276.8" r="7.3" fill="#fff" stroke="#9a9a9a" stroke-width="1"/>
<circle cx="826.8" cy="295.8" r="7.3" fill="#fff" stroke="#9a9a9a" stroke-width="1"/>
<circle cx="826.8" cy="295.8" r="3.1" fill="#3c3c3c"/>
<text x="837.6" y="280.5" font-size="11" fill="#111" font-weight="normal" text-anchor="start" textLength="49.7" lengthAdjust="spacingAndGlyphs" >Plot Types</text>
<text x="837.6" y="299.9" font-size="11" fill="#111" font-weight="normal" text-anchor="start" textLength="58.8" lengthAdjust="spacingAndGlyphs" >Distributions</text>
<rect x="814" y="335" width="244" height="1" fill="#a0a0a0"/>
<rect x="814" y="390" width="244" height="1" fill="#a0a0a0"/>
<rect x="814" y="335" width="1" height="56" fill="#a0a0a0"/>
<rect x="1057" y="335" width="1" height="56" fill="#a0a0a0"/>
<rect x="815" y="336" width="242" height="25" fill="#f0f0f0"/>
<text x="825.8" y="351.6" font-size="12" fill="#111" font-weight="bold" text-anchor="start" textLength="52.7" lengthAdjust="spacingAndGlyphs" >Plot Type</text>
<rect x="819" y="365" width="234" height="1" fill="#a0a0a0"/>
<rect x="819" y="384" width="234" height="1" fill="#a0a0a0"/>
<rect x="819" y="365" width="1" height="20" fill="#a0a0a0"/>
<rect x="1052" y="365" width="1" height="20" fill="#a0a0a0"/>
<text x="824.6" y="378.9" font-size="11" fill="#111" font-weight="normal" text-anchor="start" textLength="44.6" lengthAdjust="spacingAndGlyphs" >Reliability</text>
<path d="M1041 374 L1047 374 L1044 377.5 Z" fill="#333"/>
<rect x="814" y="397" width="244" height="1" fill="#a0a0a0"/>
<rect x="814" y="643" width="244" height="1" fill="#a0a0a0"/>
<rect x="814" y="397" width="1" height="247" fill="#a0a0a0"/>
<rect x="1057" y="397" width="1" height="247" fill="#a0a0a0"/>
<rect x="815" y="422" width="242" height="1" fill="#d8d8d8"/>
<rect x="845" y="398" width="1" height="24" fill="#d8d8d8"/>
<rect x="1054" y="398" width="1" height="24" fill="#d8d8d8"/>
<rect x="823" y="402" width="16" height="1" fill="#a8a8a8"/>
<rect x="823" y="417" width="16" height="1" fill="#a8a8a8"/>
<rect x="823" y="402" width="1" height="16" fill="#a8a8a8"/>
<rect x="838" y="402" width="1" height="16" fill="#a8a8a8"/>
<rect x="828" y="407" width="6" height="6" fill="#404040"/>
<text x="852.3" y="413.8" font-size="12" fill="#111" font-weight="bold" text-anchor="start" textLength="71.6" lengthAdjust="spacingAndGlyphs" >Distributions</text>
<rect x="823" y="425" width="16" height="1" fill="#a8a8a8"/>
<rect x="823" y="440" width="16" height="1" fill="#a8a8a8"/>
<rect x="823" y="425" width="1" height="16" fill="#a8a8a8"/>
<rect x="838" y="425" width="1" height="16" fill="#a8a8a8"/>
<path d="M826.8 433 L829.6 436.3 L834.8 428.5" stroke="#111" stroke-width="1.2" fill="none"/>
<text x="851.8" y="436.6" font-size="11" fill="#111" font-weight="normal" text-anchor="start" textLength="49.4" lengthAdjust="spacingAndGlyphs" >2P-Weibull</text>
<rect x="823" y="445" width="16" height="1" fill="#a8a8a8"/>
<rect x="823" y="460" width="16" height="1" fill="#a8a8a8"/>
<rect x="823" y="445" width="1" height="16" fill="#a8a8a8"/>
<rect x="838" y="445" width="1" height="16" fill="#a8a8a8"/>
<text x="851.8" y="456.6" font-size="11" fill="#111" font-weight="normal" text-anchor="start" textLength="49.4" lengthAdjust="spacingAndGlyphs" >3P-Weibull</text>
<rect x="823" y="465" width="16" height="1" fill="#a8a8a8"/>
<rect x="823" y="480" width="16" height="1" fill="#a8a8a8"/>
<rect x="823" y="465" width="1" height="16" fill="#a8a8a8"/>
<rect x="838" y="465" width="1" height="16" fill="#a8a8a8"/>
<path d="M826.8 473 L829.6 476.3 L834.8 468.5" stroke="#111" stroke-width="1.2" fill="none"/>
<text x="851.8" y="476.6" font-size="11" fill="#111" font-weight="normal" text-anchor="start" textLength="32.3" lengthAdjust="spacingAndGlyphs" >Normal</text>
<rect x="823" y="485" width="16" height="1" fill="#a8a8a8"/>
<rect x="823" y="500" width="16" height="1" fill="#a8a8a8"/>
<rect x="823" y="485" width="1" height="16" fill="#a8a8a8"/>
<rect x="838" y="485" width="1" height="16" fill="#a8a8a8"/>
<path d="M826.8 493 L829.6 496.3 L834.8 488.5" stroke="#111" stroke-width="1.2" fill="none"/>
<text x="851.8" y="496.6" font-size="11" fill="#111" font-weight="normal" text-anchor="start" textLength="48.2" lengthAdjust="spacingAndGlyphs" >Lognormal</text>
<rect x="823" y="505" width="16" height="1" fill="#a8a8a8"/>
<rect x="823" y="520" width="16" height="1" fill="#a8a8a8"/>
<rect x="823" y="505" width="1" height="16" fill="#a8a8a8"/>
<rect x="838" y="505" width="1" height="16" fill="#a8a8a8"/>
<text x="851.8" y="516.6" font-size="11" fill="#111" font-weight="normal" text-anchor="start" textLength="71" lengthAdjust="spacingAndGlyphs" >1P-Exponential</text>
<rect x="823" y="525" width="16" height="1" fill="#a8a8a8"/>
<rect x="823" y="540" width="16" height="1" fill="#a8a8a8"/>
<rect x="823" y="525" width="1" height="16" fill="#a8a8a8"/>
<rect x="838" y="525" width="1" height="16" fill="#a8a8a8"/>
<path d="M826.8 533 L829.6 536.3 L834.8 528.5" stroke="#111" stroke-width="1.2" fill="none"/>
<text x="851.8" y="536.6" font-size="11" fill="#111" font-weight="normal" text-anchor="start" textLength="71" lengthAdjust="spacingAndGlyphs" >2P-Exponential</text>
<rect x="823" y="545" width="16" height="1" fill="#a8a8a8"/>
<rect x="823" y="560" width="16" height="1" fill="#a8a8a8"/>
<rect x="823" y="545" width="1" height="16" fill="#a8a8a8"/>
<rect x="838" y="545" width="1" height="16" fill="#a8a8a8"/>
<text x="851.8" y="556.6" font-size="11" fill="#111" font-weight="normal" text-anchor="start" textLength="45.5" lengthAdjust="spacingAndGlyphs" >G-Gamma</text>
<rect x="823" y="565" width="16" height="1" fill="#a8a8a8"/>
<rect x="823" y="580" width="16" height="1" fill="#a8a8a8"/>
<rect x="823" y="565" width="1" height="16" fill="#a8a8a8"/>
<rect x="838" y="565" width="1" height="16" fill="#a8a8a8"/>
<text x="851.8" y="576.6" font-size="11" fill="#111" font-weight="normal" text-anchor="start" textLength="34.5" lengthAdjust="spacingAndGlyphs" >Gamma</text>
<rect x="823" y="585" width="16" height="1" fill="#a8a8a8"/>
<rect x="823" y="600" width="16" height="1" fill="#a8a8a8"/>
<rect x="823" y="585" width="1" height="16" fill="#a8a8a8"/>
<rect x="838" y="585" width="1" height="16" fill="#a8a8a8"/>
<text x="851.8" y="596.6" font-size="11" fill="#111" font-weight="normal" text-anchor="start" textLength="35" lengthAdjust="spacingAndGlyphs" >Logistic</text>
<rect x="823" y="605" width="16" height="1" fill="#a8a8a8"/>
<rect x="823" y="620" width="16" height="1" fill="#a8a8a8"/>
<rect x="823" y="605" width="1" height="16" fill="#a8a8a8"/>
<rect x="838" y="605" width="1" height="16" fill="#a8a8a8"/>
<text x="851.8" y="616.6" font-size="11" fill="#111" font-weight="normal" text-anchor="start" textLength="49" lengthAdjust="spacingAndGlyphs" >Loglogistic</text>
<rect x="823" y="625" width="16" height="1" fill="#a8a8a8"/>
<rect x="823" y="640" width="16" height="1" fill="#a8a8a8"/>
<rect x="823" y="625" width="1" height="16" fill="#a8a8a8"/>
<rect x="838" y="625" width="1" height="16" fill="#a8a8a8"/>
<text x="851.8" y="636.6" font-size="11" fill="#111" font-weight="normal" text-anchor="start" textLength="35" lengthAdjust="spacingAndGlyphs" >Gumbel</text>
<rect x="814" y="651" width="244" height="1" fill="#a0a0a0"/>
<rect x="814" y="676" width="244" height="1" fill="#a0a0a0"/>
<rect x="814" y="651" width="1" height="26" fill="#a0a0a0"/>
<rect x="1057" y="651" width="1" height="26" fill="#a0a0a0"/>
<g transform="translate(821,656)"><path d="M0.5 0.5 L7.5 0.5 L11.5 4.5 L11.5 15.5 L0.5 15.5 Z" fill="#eef2f6" stroke="#2f62ad" stroke-width="1"/><path d="M7.5 0.5 L7.5 4.5 L11.5 4.5 Z" fill="#2f62ad"/><path d="M1.8 6.5 L4 14.5 L6 9 L8 14.5 L10.2 6.5" stroke="#1f55a5" stroke-width="1.8" fill="none" stroke-linejoin="miter"/></g>
<text x="841" y="667.6" font-size="11" fill="#1a1aff" font-weight="normal" text-anchor="start" textLength="97.5" lengthAdjust="spacingAndGlyphs" >Analysis A\Complete</text>
<rect x="841" y="669" width="98" height="1" fill="#1a1aff"/>
</svg></body></html>
